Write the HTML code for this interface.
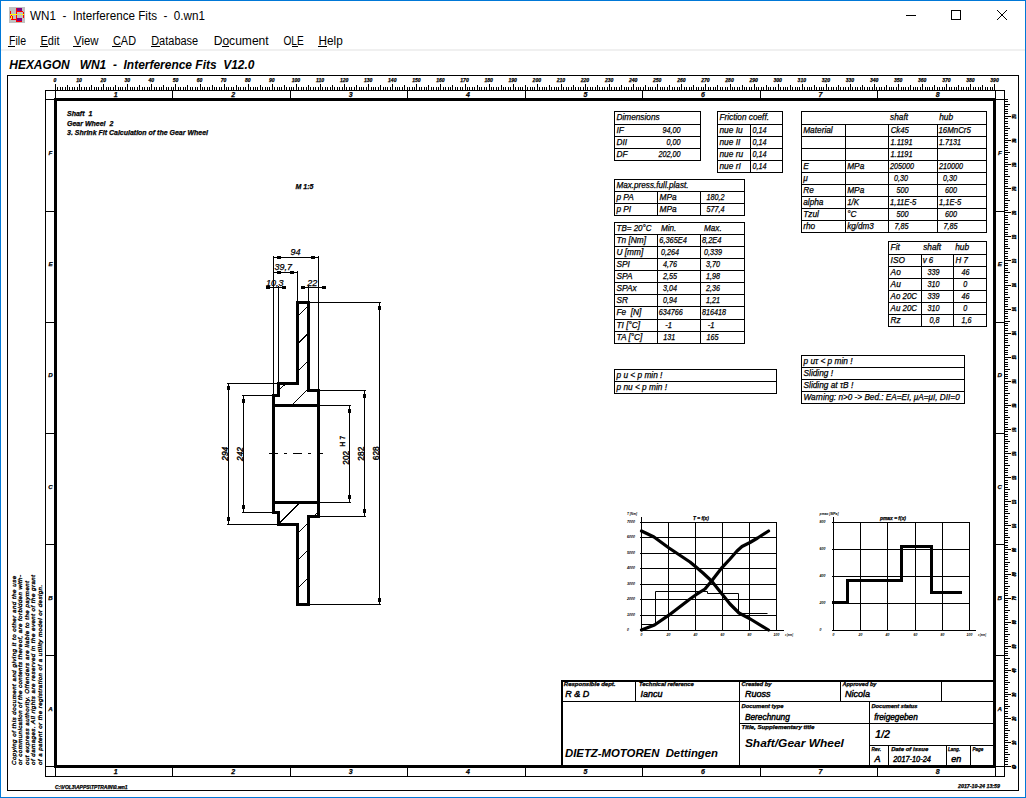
<!DOCTYPE html><html><head><meta charset="utf-8"><title>WN1 - Interference Fits</title><style>
html,body{margin:0;padding:0;background:#fff;width:1026px;height:798px;overflow:hidden}
svg{position:absolute;left:0;top:0;display:block}
text{font-family:"Liberation Sans",sans-serif;white-space:pre;stroke:#000;stroke-width:0.25px;paint-order:stroke}
</style></head><body>
<svg width="1026" height="798" viewBox="0 0 1026 798" shape-rendering="crispEdges">
<rect x="0" y="0" width="1026" height="798" fill="#fff"/>
<rect x="0" y="0" width="1026" height="1" fill="#0078d7"/>
<rect x="0" y="797" width="1026" height="1" fill="#0078d7"/>
<rect x="0" y="0" width="1" height="798" fill="#0078d7"/>
<rect x="1025" y="0" width="1" height="798" fill="#0078d7"/>
<rect x="9" y="7" width="16" height="16" fill="#c0c0c0"/>
<rect x="17" y="8" width="5" height="3" fill="#800080"/>
<rect x="17" y="18" width="5" height="3" fill="#800080"/>
<rect x="16" y="8" width="1" height="14" fill="#ff0000"/>
<rect x="16" y="11" width="7" height="1" fill="#ff0000"/>
<rect x="23" y="12" width="1" height="6" fill="#ff0000"/>
<rect x="16" y="21" width="6" height="1" fill="#ff0000"/>
<rect x="10" y="11" width="1" height="3" fill="#ff0000"/>
<rect x="10" y="16" width="1" height="2" fill="#ff0000"/>
<rect x="10" y="14" width="7" height="1" fill="#ffff00"/>
<rect x="18" y="14" width="1" height="1" fill="#ffff00"/>
<rect x="20" y="14" width="1" height="1" fill="#ffff00"/>
<rect x="22" y="14" width="2" height="1" fill="#ffff00"/>
<rect x="11" y="15" width="1" height="1" fill="#ff0000"/>
<rect x="11" y="16" width="1" height="3" fill="#ffff00"/>
<rect x="12" y="16" width="1" height="3" fill="#ff0000"/>
<rect x="11" y="19" width="5" height="1" fill="#ff0000"/>
</svg><svg width="1026" height="798" viewBox="0 0 1026 798">
<text x="30" y="20.2" font-size="12" textLength="175" lengthAdjust="spacingAndGlyphs" style="stroke-width:0" fill="#000">WN1  -  Interference Fits  -  0.wn1</text>
<g shape-rendering="crispEdges">
<rect x="906" y="15" width="10" height="1" fill="#000"/>
<rect x="951.5" y="10.5" width="9" height="9" fill="none" stroke="#000" stroke-width="1"/>
</g>
<path d="M997 10 L1007 20 M1007 10 L997 20" stroke="#000" stroke-width="1"/>
<text x="9" y="44.6" font-size="12" textLength="17" lengthAdjust="spacingAndGlyphs" style="stroke-width:0" fill="#000">File</text>
<text x="40.5" y="44.6" font-size="12" textLength="19" lengthAdjust="spacingAndGlyphs" style="stroke-width:0" fill="#000">Edit</text>
<text x="74" y="44.6" font-size="12" textLength="24.5" lengthAdjust="spacingAndGlyphs" style="stroke-width:0" fill="#000">View</text>
<text x="113" y="44.6" font-size="12" textLength="23" lengthAdjust="spacingAndGlyphs" style="stroke-width:0" fill="#000">CAD</text>
<text x="151.2" y="44.6" font-size="12" textLength="47" lengthAdjust="spacingAndGlyphs" style="stroke-width:0" fill="#000">Database</text>
<text x="213.7" y="44.6" font-size="12" textLength="55" lengthAdjust="spacingAndGlyphs" style="stroke-width:0" fill="#000">Document</text>
<text x="283.4" y="44.6" font-size="12" textLength="20.3" lengthAdjust="spacingAndGlyphs" style="stroke-width:0" fill="#000">OLE</text>
<text x="318.5" y="44.6" font-size="12" textLength="24.2" lengthAdjust="spacingAndGlyphs" style="stroke-width:0" fill="#000">Help</text>
<g shape-rendering="crispEdges">
<rect x="8" y="46" width="7" height="1" fill="#000"/>
<rect x="40" y="46" width="8" height="1" fill="#000"/>
<rect x="73" y="46" width="8" height="1" fill="#000"/>
<rect x="112" y="46" width="9" height="1" fill="#000"/>
<rect x="151" y="46" width="9" height="1" fill="#000"/>
<rect x="222" y="46" width="7" height="1" fill="#000"/>
<rect x="292" y="46" width="6" height="1" fill="#000"/>
<rect x="318" y="46" width="9" height="1" fill="#000"/>
<rect x="1" y="49" width="1024" height="2" fill="#f0f0f0"/>
</g>
<text x="9.3" y="68.8" font-size="12" font-weight="bold" font-style="italic" textLength="60.4" lengthAdjust="spacingAndGlyphs" style="stroke-width:0" fill="#000">HEXAGON</text>
<text x="79.7" y="68.8" font-size="12" font-weight="bold" font-style="italic" textLength="174.8" lengthAdjust="spacingAndGlyphs" style="stroke-width:0" fill="#000">WN1  -  Interference Fits  V12.0</text>
<g shape-rendering="crispEdges">
<rect x="7" y="75" width="1012" height="1" fill="#000"/>
<rect x="7" y="790" width="1012" height="1" fill="#000"/>
<rect x="7" y="75" width="1" height="716" fill="#000"/>
<rect x="1018" y="75" width="1" height="716" fill="#000"/>
<rect x="45" y="90" width="960" height="1" fill="#000"/>
<rect x="45" y="776" width="960" height="1" fill="#000"/>
<rect x="45" y="90" width="1" height="687" fill="#000"/>
<rect x="1004" y="90" width="1" height="687" fill="#000"/>
<rect x="54" y="98" width="941" height="3" fill="#000"/>
<rect x="54" y="765" width="941" height="3" fill="#000"/>
<rect x="54" y="98" width="3" height="670" fill="#000"/>
<rect x="993" y="98" width="3" height="670" fill="#000"/>
<rect x="45" y="99" width="11" height="1" fill="#000"/>
<rect x="55" y="90" width="1" height="10" fill="#000"/>
<rect x="995" y="99" width="10" height="1" fill="#000"/>
<rect x="995" y="90" width="1" height="10" fill="#000"/>
<rect x="45" y="766" width="11" height="1" fill="#000"/>
<rect x="55" y="766" width="1" height="11" fill="#000"/>
<rect x="995" y="766" width="10" height="1" fill="#000"/>
<rect x="995" y="766" width="1" height="11" fill="#000"/>
<rect x="172" y="90" width="1" height="10" fill="#000"/>
<rect x="172" y="766" width="1" height="11" fill="#000"/>
<rect x="290" y="90" width="1" height="10" fill="#000"/>
<rect x="290" y="766" width="1" height="11" fill="#000"/>
<rect x="407" y="90" width="1" height="10" fill="#000"/>
<rect x="407" y="766" width="1" height="11" fill="#000"/>
<rect x="525" y="90" width="1" height="10" fill="#000"/>
<rect x="525" y="766" width="1" height="11" fill="#000"/>
<rect x="642" y="90" width="1" height="10" fill="#000"/>
<rect x="642" y="766" width="1" height="11" fill="#000"/>
<rect x="760" y="90" width="1" height="10" fill="#000"/>
<rect x="760" y="766" width="1" height="11" fill="#000"/>
<rect x="877" y="90" width="1" height="10" fill="#000"/>
<rect x="877" y="766" width="1" height="11" fill="#000"/>
<rect x="45" y="211" width="11" height="1" fill="#000"/>
<rect x="995" y="211" width="10" height="1" fill="#000"/>
<rect x="45" y="322" width="11" height="1" fill="#000"/>
<rect x="995" y="322" width="10" height="1" fill="#000"/>
<rect x="45" y="433" width="11" height="1" fill="#000"/>
<rect x="995" y="433" width="10" height="1" fill="#000"/>
<rect x="45" y="544" width="11" height="1" fill="#000"/>
<rect x="995" y="544" width="10" height="1" fill="#000"/>
<rect x="45" y="655" width="11" height="1" fill="#000"/>
<rect x="995" y="655" width="10" height="1" fill="#000"/>
<rect x="55" y="84" width="1" height="6" fill="#000"/>
<rect x="57" y="87" width="1" height="3" fill="#000"/>
<rect x="60" y="87" width="1" height="3" fill="#000"/>
<rect x="62" y="87" width="1" height="3" fill="#000"/>
<rect x="65" y="87" width="1" height="3" fill="#000"/>
<rect x="67" y="85" width="1" height="5" fill="#000"/>
<rect x="69" y="87" width="1" height="3" fill="#000"/>
<rect x="72" y="87" width="1" height="3" fill="#000"/>
<rect x="74" y="87" width="1" height="3" fill="#000"/>
<rect x="77" y="87" width="1" height="3" fill="#000"/>
<rect x="79" y="84" width="1" height="6" fill="#000"/>
<rect x="81" y="87" width="1" height="3" fill="#000"/>
<rect x="84" y="87" width="1" height="3" fill="#000"/>
<rect x="86" y="87" width="1" height="3" fill="#000"/>
<rect x="89" y="87" width="1" height="3" fill="#000"/>
<rect x="91" y="85" width="1" height="5" fill="#000"/>
<rect x="94" y="87" width="1" height="3" fill="#000"/>
<rect x="96" y="87" width="1" height="3" fill="#000"/>
<rect x="98" y="87" width="1" height="3" fill="#000"/>
<rect x="101" y="87" width="1" height="3" fill="#000"/>
<rect x="103" y="84" width="1" height="6" fill="#000"/>
<rect x="106" y="87" width="1" height="3" fill="#000"/>
<rect x="108" y="87" width="1" height="3" fill="#000"/>
<rect x="110" y="87" width="1" height="3" fill="#000"/>
<rect x="113" y="87" width="1" height="3" fill="#000"/>
<rect x="115" y="85" width="1" height="5" fill="#000"/>
<rect x="118" y="87" width="1" height="3" fill="#000"/>
<rect x="120" y="87" width="1" height="3" fill="#000"/>
<rect x="122" y="87" width="1" height="3" fill="#000"/>
<rect x="125" y="87" width="1" height="3" fill="#000"/>
<rect x="127" y="84" width="1" height="6" fill="#000"/>
<rect x="130" y="87" width="1" height="3" fill="#000"/>
<rect x="132" y="87" width="1" height="3" fill="#000"/>
<rect x="134" y="87" width="1" height="3" fill="#000"/>
<rect x="137" y="87" width="1" height="3" fill="#000"/>
<rect x="139" y="85" width="1" height="5" fill="#000"/>
<rect x="142" y="87" width="1" height="3" fill="#000"/>
<rect x="144" y="87" width="1" height="3" fill="#000"/>
<rect x="147" y="87" width="1" height="3" fill="#000"/>
<rect x="149" y="87" width="1" height="3" fill="#000"/>
<rect x="151" y="84" width="1" height="6" fill="#000"/>
<rect x="154" y="87" width="1" height="3" fill="#000"/>
<rect x="156" y="87" width="1" height="3" fill="#000"/>
<rect x="159" y="87" width="1" height="3" fill="#000"/>
<rect x="161" y="87" width="1" height="3" fill="#000"/>
<rect x="163" y="85" width="1" height="5" fill="#000"/>
<rect x="166" y="87" width="1" height="3" fill="#000"/>
<rect x="168" y="87" width="1" height="3" fill="#000"/>
<rect x="171" y="87" width="1" height="3" fill="#000"/>
<rect x="173" y="87" width="1" height="3" fill="#000"/>
<rect x="175" y="84" width="1" height="6" fill="#000"/>
<rect x="178" y="87" width="1" height="3" fill="#000"/>
<rect x="180" y="87" width="1" height="3" fill="#000"/>
<rect x="183" y="87" width="1" height="3" fill="#000"/>
<rect x="185" y="87" width="1" height="3" fill="#000"/>
<rect x="187" y="85" width="1" height="5" fill="#000"/>
<rect x="190" y="87" width="1" height="3" fill="#000"/>
<rect x="192" y="87" width="1" height="3" fill="#000"/>
<rect x="195" y="87" width="1" height="3" fill="#000"/>
<rect x="197" y="87" width="1" height="3" fill="#000"/>
<rect x="200" y="84" width="1" height="6" fill="#000"/>
<rect x="202" y="87" width="1" height="3" fill="#000"/>
<rect x="204" y="87" width="1" height="3" fill="#000"/>
<rect x="207" y="87" width="1" height="3" fill="#000"/>
<rect x="209" y="87" width="1" height="3" fill="#000"/>
<rect x="212" y="85" width="1" height="5" fill="#000"/>
<rect x="214" y="87" width="1" height="3" fill="#000"/>
<rect x="216" y="87" width="1" height="3" fill="#000"/>
<rect x="219" y="87" width="1" height="3" fill="#000"/>
<rect x="221" y="87" width="1" height="3" fill="#000"/>
<rect x="224" y="84" width="1" height="6" fill="#000"/>
<rect x="226" y="87" width="1" height="3" fill="#000"/>
<rect x="228" y="87" width="1" height="3" fill="#000"/>
<rect x="231" y="87" width="1" height="3" fill="#000"/>
<rect x="233" y="87" width="1" height="3" fill="#000"/>
<rect x="236" y="85" width="1" height="5" fill="#000"/>
<rect x="238" y="87" width="1" height="3" fill="#000"/>
<rect x="240" y="87" width="1" height="3" fill="#000"/>
<rect x="243" y="87" width="1" height="3" fill="#000"/>
<rect x="245" y="87" width="1" height="3" fill="#000"/>
<rect x="248" y="84" width="1" height="6" fill="#000"/>
<rect x="250" y="87" width="1" height="3" fill="#000"/>
<rect x="253" y="87" width="1" height="3" fill="#000"/>
<rect x="255" y="87" width="1" height="3" fill="#000"/>
<rect x="257" y="87" width="1" height="3" fill="#000"/>
<rect x="260" y="85" width="1" height="5" fill="#000"/>
<rect x="262" y="87" width="1" height="3" fill="#000"/>
<rect x="265" y="87" width="1" height="3" fill="#000"/>
<rect x="267" y="87" width="1" height="3" fill="#000"/>
<rect x="269" y="87" width="1" height="3" fill="#000"/>
<rect x="272" y="84" width="1" height="6" fill="#000"/>
<rect x="274" y="87" width="1" height="3" fill="#000"/>
<rect x="277" y="87" width="1" height="3" fill="#000"/>
<rect x="279" y="87" width="1" height="3" fill="#000"/>
<rect x="281" y="87" width="1" height="3" fill="#000"/>
<rect x="284" y="85" width="1" height="5" fill="#000"/>
<rect x="286" y="87" width="1" height="3" fill="#000"/>
<rect x="289" y="87" width="1" height="3" fill="#000"/>
<rect x="291" y="87" width="1" height="3" fill="#000"/>
<rect x="293" y="87" width="1" height="3" fill="#000"/>
<rect x="296" y="84" width="1" height="6" fill="#000"/>
<rect x="298" y="87" width="1" height="3" fill="#000"/>
<rect x="301" y="87" width="1" height="3" fill="#000"/>
<rect x="303" y="87" width="1" height="3" fill="#000"/>
<rect x="306" y="87" width="1" height="3" fill="#000"/>
<rect x="308" y="85" width="1" height="5" fill="#000"/>
<rect x="310" y="87" width="1" height="3" fill="#000"/>
<rect x="313" y="87" width="1" height="3" fill="#000"/>
<rect x="315" y="87" width="1" height="3" fill="#000"/>
<rect x="318" y="87" width="1" height="3" fill="#000"/>
<rect x="320" y="84" width="1" height="6" fill="#000"/>
<rect x="322" y="87" width="1" height="3" fill="#000"/>
<rect x="325" y="87" width="1" height="3" fill="#000"/>
<rect x="327" y="87" width="1" height="3" fill="#000"/>
<rect x="330" y="87" width="1" height="3" fill="#000"/>
<rect x="332" y="85" width="1" height="5" fill="#000"/>
<rect x="334" y="87" width="1" height="3" fill="#000"/>
<rect x="337" y="87" width="1" height="3" fill="#000"/>
<rect x="339" y="87" width="1" height="3" fill="#000"/>
<rect x="342" y="87" width="1" height="3" fill="#000"/>
<rect x="344" y="84" width="1" height="6" fill="#000"/>
<rect x="346" y="87" width="1" height="3" fill="#000"/>
<rect x="349" y="87" width="1" height="3" fill="#000"/>
<rect x="351" y="87" width="1" height="3" fill="#000"/>
<rect x="354" y="87" width="1" height="3" fill="#000"/>
<rect x="356" y="85" width="1" height="5" fill="#000"/>
<rect x="359" y="87" width="1" height="3" fill="#000"/>
<rect x="361" y="87" width="1" height="3" fill="#000"/>
<rect x="363" y="87" width="1" height="3" fill="#000"/>
<rect x="366" y="87" width="1" height="3" fill="#000"/>
<rect x="368" y="84" width="1" height="6" fill="#000"/>
<rect x="371" y="87" width="1" height="3" fill="#000"/>
<rect x="373" y="87" width="1" height="3" fill="#000"/>
<rect x="375" y="87" width="1" height="3" fill="#000"/>
<rect x="378" y="87" width="1" height="3" fill="#000"/>
<rect x="380" y="85" width="1" height="5" fill="#000"/>
<rect x="383" y="87" width="1" height="3" fill="#000"/>
<rect x="385" y="87" width="1" height="3" fill="#000"/>
<rect x="387" y="87" width="1" height="3" fill="#000"/>
<rect x="390" y="87" width="1" height="3" fill="#000"/>
<rect x="392" y="84" width="1" height="6" fill="#000"/>
<rect x="395" y="87" width="1" height="3" fill="#000"/>
<rect x="397" y="87" width="1" height="3" fill="#000"/>
<rect x="399" y="87" width="1" height="3" fill="#000"/>
<rect x="402" y="87" width="1" height="3" fill="#000"/>
<rect x="404" y="85" width="1" height="5" fill="#000"/>
<rect x="407" y="87" width="1" height="3" fill="#000"/>
<rect x="409" y="87" width="1" height="3" fill="#000"/>
<rect x="412" y="87" width="1" height="3" fill="#000"/>
<rect x="414" y="87" width="1" height="3" fill="#000"/>
<rect x="416" y="84" width="1" height="6" fill="#000"/>
<rect x="419" y="87" width="1" height="3" fill="#000"/>
<rect x="421" y="87" width="1" height="3" fill="#000"/>
<rect x="424" y="87" width="1" height="3" fill="#000"/>
<rect x="426" y="87" width="1" height="3" fill="#000"/>
<rect x="428" y="85" width="1" height="5" fill="#000"/>
<rect x="431" y="87" width="1" height="3" fill="#000"/>
<rect x="433" y="87" width="1" height="3" fill="#000"/>
<rect x="436" y="87" width="1" height="3" fill="#000"/>
<rect x="438" y="87" width="1" height="3" fill="#000"/>
<rect x="440" y="84" width="1" height="6" fill="#000"/>
<rect x="443" y="87" width="1" height="3" fill="#000"/>
<rect x="445" y="87" width="1" height="3" fill="#000"/>
<rect x="448" y="87" width="1" height="3" fill="#000"/>
<rect x="450" y="87" width="1" height="3" fill="#000"/>
<rect x="452" y="85" width="1" height="5" fill="#000"/>
<rect x="455" y="87" width="1" height="3" fill="#000"/>
<rect x="457" y="87" width="1" height="3" fill="#000"/>
<rect x="460" y="87" width="1" height="3" fill="#000"/>
<rect x="462" y="87" width="1" height="3" fill="#000"/>
<rect x="465" y="84" width="1" height="6" fill="#000"/>
<rect x="467" y="87" width="1" height="3" fill="#000"/>
<rect x="469" y="87" width="1" height="3" fill="#000"/>
<rect x="472" y="87" width="1" height="3" fill="#000"/>
<rect x="474" y="87" width="1" height="3" fill="#000"/>
<rect x="477" y="85" width="1" height="5" fill="#000"/>
<rect x="479" y="87" width="1" height="3" fill="#000"/>
<rect x="481" y="87" width="1" height="3" fill="#000"/>
<rect x="484" y="87" width="1" height="3" fill="#000"/>
<rect x="486" y="87" width="1" height="3" fill="#000"/>
<rect x="489" y="84" width="1" height="6" fill="#000"/>
<rect x="491" y="87" width="1" height="3" fill="#000"/>
<rect x="493" y="87" width="1" height="3" fill="#000"/>
<rect x="496" y="87" width="1" height="3" fill="#000"/>
<rect x="498" y="87" width="1" height="3" fill="#000"/>
<rect x="501" y="85" width="1" height="5" fill="#000"/>
<rect x="503" y="87" width="1" height="3" fill="#000"/>
<rect x="505" y="87" width="1" height="3" fill="#000"/>
<rect x="508" y="87" width="1" height="3" fill="#000"/>
<rect x="510" y="87" width="1" height="3" fill="#000"/>
<rect x="513" y="84" width="1" height="6" fill="#000"/>
<rect x="515" y="87" width="1" height="3" fill="#000"/>
<rect x="518" y="87" width="1" height="3" fill="#000"/>
<rect x="520" y="87" width="1" height="3" fill="#000"/>
<rect x="522" y="87" width="1" height="3" fill="#000"/>
<rect x="525" y="85" width="1" height="5" fill="#000"/>
<rect x="527" y="87" width="1" height="3" fill="#000"/>
<rect x="530" y="87" width="1" height="3" fill="#000"/>
<rect x="532" y="87" width="1" height="3" fill="#000"/>
<rect x="534" y="87" width="1" height="3" fill="#000"/>
<rect x="537" y="84" width="1" height="6" fill="#000"/>
<rect x="539" y="87" width="1" height="3" fill="#000"/>
<rect x="542" y="87" width="1" height="3" fill="#000"/>
<rect x="544" y="87" width="1" height="3" fill="#000"/>
<rect x="546" y="87" width="1" height="3" fill="#000"/>
<rect x="549" y="85" width="1" height="5" fill="#000"/>
<rect x="551" y="87" width="1" height="3" fill="#000"/>
<rect x="554" y="87" width="1" height="3" fill="#000"/>
<rect x="556" y="87" width="1" height="3" fill="#000"/>
<rect x="558" y="87" width="1" height="3" fill="#000"/>
<rect x="561" y="84" width="1" height="6" fill="#000"/>
<rect x="563" y="87" width="1" height="3" fill="#000"/>
<rect x="566" y="87" width="1" height="3" fill="#000"/>
<rect x="568" y="87" width="1" height="3" fill="#000"/>
<rect x="571" y="87" width="1" height="3" fill="#000"/>
<rect x="573" y="85" width="1" height="5" fill="#000"/>
<rect x="575" y="87" width="1" height="3" fill="#000"/>
<rect x="578" y="87" width="1" height="3" fill="#000"/>
<rect x="580" y="87" width="1" height="3" fill="#000"/>
<rect x="583" y="87" width="1" height="3" fill="#000"/>
<rect x="585" y="84" width="1" height="6" fill="#000"/>
<rect x="587" y="87" width="1" height="3" fill="#000"/>
<rect x="590" y="87" width="1" height="3" fill="#000"/>
<rect x="592" y="87" width="1" height="3" fill="#000"/>
<rect x="595" y="87" width="1" height="3" fill="#000"/>
<rect x="597" y="85" width="1" height="5" fill="#000"/>
<rect x="599" y="87" width="1" height="3" fill="#000"/>
<rect x="602" y="87" width="1" height="3" fill="#000"/>
<rect x="604" y="87" width="1" height="3" fill="#000"/>
<rect x="607" y="87" width="1" height="3" fill="#000"/>
<rect x="609" y="84" width="1" height="6" fill="#000"/>
<rect x="611" y="87" width="1" height="3" fill="#000"/>
<rect x="614" y="87" width="1" height="3" fill="#000"/>
<rect x="616" y="87" width="1" height="3" fill="#000"/>
<rect x="619" y="87" width="1" height="3" fill="#000"/>
<rect x="621" y="85" width="1" height="5" fill="#000"/>
<rect x="624" y="87" width="1" height="3" fill="#000"/>
<rect x="626" y="87" width="1" height="3" fill="#000"/>
<rect x="628" y="87" width="1" height="3" fill="#000"/>
<rect x="631" y="87" width="1" height="3" fill="#000"/>
<rect x="633" y="84" width="1" height="6" fill="#000"/>
<rect x="636" y="87" width="1" height="3" fill="#000"/>
<rect x="638" y="87" width="1" height="3" fill="#000"/>
<rect x="640" y="87" width="1" height="3" fill="#000"/>
<rect x="643" y="87" width="1" height="3" fill="#000"/>
<rect x="645" y="85" width="1" height="5" fill="#000"/>
<rect x="648" y="87" width="1" height="3" fill="#000"/>
<rect x="650" y="87" width="1" height="3" fill="#000"/>
<rect x="652" y="87" width="1" height="3" fill="#000"/>
<rect x="655" y="87" width="1" height="3" fill="#000"/>
<rect x="657" y="84" width="1" height="6" fill="#000"/>
<rect x="660" y="87" width="1" height="3" fill="#000"/>
<rect x="662" y="87" width="1" height="3" fill="#000"/>
<rect x="664" y="87" width="1" height="3" fill="#000"/>
<rect x="667" y="87" width="1" height="3" fill="#000"/>
<rect x="669" y="85" width="1" height="5" fill="#000"/>
<rect x="672" y="87" width="1" height="3" fill="#000"/>
<rect x="674" y="87" width="1" height="3" fill="#000"/>
<rect x="677" y="87" width="1" height="3" fill="#000"/>
<rect x="679" y="87" width="1" height="3" fill="#000"/>
<rect x="681" y="84" width="1" height="6" fill="#000"/>
<rect x="684" y="87" width="1" height="3" fill="#000"/>
<rect x="686" y="87" width="1" height="3" fill="#000"/>
<rect x="689" y="87" width="1" height="3" fill="#000"/>
<rect x="691" y="87" width="1" height="3" fill="#000"/>
<rect x="693" y="85" width="1" height="5" fill="#000"/>
<rect x="696" y="87" width="1" height="3" fill="#000"/>
<rect x="698" y="87" width="1" height="3" fill="#000"/>
<rect x="701" y="87" width="1" height="3" fill="#000"/>
<rect x="703" y="87" width="1" height="3" fill="#000"/>
<rect x="705" y="84" width="1" height="6" fill="#000"/>
<rect x="708" y="87" width="1" height="3" fill="#000"/>
<rect x="710" y="87" width="1" height="3" fill="#000"/>
<rect x="713" y="87" width="1" height="3" fill="#000"/>
<rect x="715" y="87" width="1" height="3" fill="#000"/>
<rect x="717" y="85" width="1" height="5" fill="#000"/>
<rect x="720" y="87" width="1" height="3" fill="#000"/>
<rect x="722" y="87" width="1" height="3" fill="#000"/>
<rect x="725" y="87" width="1" height="3" fill="#000"/>
<rect x="727" y="87" width="1" height="3" fill="#000"/>
<rect x="730" y="84" width="1" height="6" fill="#000"/>
<rect x="732" y="87" width="1" height="3" fill="#000"/>
<rect x="734" y="87" width="1" height="3" fill="#000"/>
<rect x="737" y="87" width="1" height="3" fill="#000"/>
<rect x="739" y="87" width="1" height="3" fill="#000"/>
<rect x="742" y="85" width="1" height="5" fill="#000"/>
<rect x="744" y="87" width="1" height="3" fill="#000"/>
<rect x="746" y="87" width="1" height="3" fill="#000"/>
<rect x="749" y="87" width="1" height="3" fill="#000"/>
<rect x="751" y="87" width="1" height="3" fill="#000"/>
<rect x="754" y="84" width="1" height="6" fill="#000"/>
<rect x="756" y="87" width="1" height="3" fill="#000"/>
<rect x="758" y="87" width="1" height="3" fill="#000"/>
<rect x="761" y="87" width="1" height="3" fill="#000"/>
<rect x="763" y="87" width="1" height="3" fill="#000"/>
<rect x="766" y="85" width="1" height="5" fill="#000"/>
<rect x="768" y="87" width="1" height="3" fill="#000"/>
<rect x="770" y="87" width="1" height="3" fill="#000"/>
<rect x="773" y="87" width="1" height="3" fill="#000"/>
<rect x="775" y="87" width="1" height="3" fill="#000"/>
<rect x="778" y="84" width="1" height="6" fill="#000"/>
<rect x="780" y="87" width="1" height="3" fill="#000"/>
<rect x="783" y="87" width="1" height="3" fill="#000"/>
<rect x="785" y="87" width="1" height="3" fill="#000"/>
<rect x="787" y="87" width="1" height="3" fill="#000"/>
<rect x="790" y="85" width="1" height="5" fill="#000"/>
<rect x="792" y="87" width="1" height="3" fill="#000"/>
<rect x="795" y="87" width="1" height="3" fill="#000"/>
<rect x="797" y="87" width="1" height="3" fill="#000"/>
<rect x="799" y="87" width="1" height="3" fill="#000"/>
<rect x="802" y="84" width="1" height="6" fill="#000"/>
<rect x="804" y="87" width="1" height="3" fill="#000"/>
<rect x="807" y="87" width="1" height="3" fill="#000"/>
<rect x="809" y="87" width="1" height="3" fill="#000"/>
<rect x="811" y="87" width="1" height="3" fill="#000"/>
<rect x="814" y="85" width="1" height="5" fill="#000"/>
<rect x="816" y="87" width="1" height="3" fill="#000"/>
<rect x="819" y="87" width="1" height="3" fill="#000"/>
<rect x="821" y="87" width="1" height="3" fill="#000"/>
<rect x="823" y="87" width="1" height="3" fill="#000"/>
<rect x="826" y="84" width="1" height="6" fill="#000"/>
<rect x="828" y="87" width="1" height="3" fill="#000"/>
<rect x="831" y="87" width="1" height="3" fill="#000"/>
<rect x="833" y="87" width="1" height="3" fill="#000"/>
<rect x="836" y="87" width="1" height="3" fill="#000"/>
<rect x="838" y="85" width="1" height="5" fill="#000"/>
<rect x="840" y="87" width="1" height="3" fill="#000"/>
<rect x="843" y="87" width="1" height="3" fill="#000"/>
<rect x="845" y="87" width="1" height="3" fill="#000"/>
<rect x="848" y="87" width="1" height="3" fill="#000"/>
<rect x="850" y="84" width="1" height="6" fill="#000"/>
<rect x="852" y="87" width="1" height="3" fill="#000"/>
<rect x="855" y="87" width="1" height="3" fill="#000"/>
<rect x="857" y="87" width="1" height="3" fill="#000"/>
<rect x="860" y="87" width="1" height="3" fill="#000"/>
<rect x="862" y="85" width="1" height="5" fill="#000"/>
<rect x="864" y="87" width="1" height="3" fill="#000"/>
<rect x="867" y="87" width="1" height="3" fill="#000"/>
<rect x="869" y="87" width="1" height="3" fill="#000"/>
<rect x="872" y="87" width="1" height="3" fill="#000"/>
<rect x="874" y="84" width="1" height="6" fill="#000"/>
<rect x="876" y="87" width="1" height="3" fill="#000"/>
<rect x="879" y="87" width="1" height="3" fill="#000"/>
<rect x="881" y="87" width="1" height="3" fill="#000"/>
<rect x="884" y="87" width="1" height="3" fill="#000"/>
<rect x="886" y="85" width="1" height="5" fill="#000"/>
<rect x="889" y="87" width="1" height="3" fill="#000"/>
<rect x="891" y="87" width="1" height="3" fill="#000"/>
<rect x="893" y="87" width="1" height="3" fill="#000"/>
<rect x="896" y="87" width="1" height="3" fill="#000"/>
<rect x="898" y="84" width="1" height="6" fill="#000"/>
<rect x="901" y="87" width="1" height="3" fill="#000"/>
<rect x="903" y="87" width="1" height="3" fill="#000"/>
<rect x="905" y="87" width="1" height="3" fill="#000"/>
<rect x="908" y="87" width="1" height="3" fill="#000"/>
<rect x="910" y="85" width="1" height="5" fill="#000"/>
<rect x="913" y="87" width="1" height="3" fill="#000"/>
<rect x="915" y="87" width="1" height="3" fill="#000"/>
<rect x="917" y="87" width="1" height="3" fill="#000"/>
<rect x="920" y="87" width="1" height="3" fill="#000"/>
<rect x="922" y="84" width="1" height="6" fill="#000"/>
<rect x="925" y="87" width="1" height="3" fill="#000"/>
<rect x="927" y="87" width="1" height="3" fill="#000"/>
<rect x="929" y="87" width="1" height="3" fill="#000"/>
<rect x="932" y="87" width="1" height="3" fill="#000"/>
<rect x="934" y="85" width="1" height="5" fill="#000"/>
<rect x="937" y="87" width="1" height="3" fill="#000"/>
<rect x="939" y="87" width="1" height="3" fill="#000"/>
<rect x="942" y="87" width="1" height="3" fill="#000"/>
<rect x="944" y="87" width="1" height="3" fill="#000"/>
<rect x="946" y="84" width="1" height="6" fill="#000"/>
<rect x="949" y="87" width="1" height="3" fill="#000"/>
<rect x="951" y="87" width="1" height="3" fill="#000"/>
<rect x="954" y="87" width="1" height="3" fill="#000"/>
<rect x="956" y="87" width="1" height="3" fill="#000"/>
<rect x="958" y="85" width="1" height="5" fill="#000"/>
<rect x="961" y="87" width="1" height="3" fill="#000"/>
<rect x="963" y="87" width="1" height="3" fill="#000"/>
<rect x="966" y="87" width="1" height="3" fill="#000"/>
<rect x="968" y="87" width="1" height="3" fill="#000"/>
<rect x="970" y="84" width="1" height="6" fill="#000"/>
<rect x="973" y="87" width="1" height="3" fill="#000"/>
<rect x="975" y="87" width="1" height="3" fill="#000"/>
<rect x="978" y="87" width="1" height="3" fill="#000"/>
<rect x="980" y="87" width="1" height="3" fill="#000"/>
<rect x="982" y="85" width="1" height="5" fill="#000"/>
<rect x="985" y="87" width="1" height="3" fill="#000"/>
<rect x="987" y="87" width="1" height="3" fill="#000"/>
<rect x="990" y="87" width="1" height="3" fill="#000"/>
<rect x="992" y="87" width="1" height="3" fill="#000"/>
<rect x="994" y="84" width="1" height="6" fill="#000"/>
<rect x="1005" y="766" width="6" height="1" fill="#000"/>
<rect x="1005" y="764" width="3" height="1" fill="#000"/>
<rect x="1005" y="761" width="3" height="1" fill="#000"/>
<rect x="1005" y="759" width="3" height="1" fill="#000"/>
<rect x="1005" y="757" width="3" height="1" fill="#000"/>
<rect x="1005" y="754" width="5" height="1" fill="#000"/>
<rect x="1005" y="752" width="3" height="1" fill="#000"/>
<rect x="1005" y="749" width="3" height="1" fill="#000"/>
<rect x="1005" y="747" width="3" height="1" fill="#000"/>
<rect x="1005" y="745" width="3" height="1" fill="#000"/>
<rect x="1005" y="742" width="6" height="1" fill="#000"/>
<rect x="1005" y="740" width="3" height="1" fill="#000"/>
<rect x="1005" y="737" width="3" height="1" fill="#000"/>
<rect x="1005" y="735" width="3" height="1" fill="#000"/>
<rect x="1005" y="733" width="3" height="1" fill="#000"/>
<rect x="1005" y="730" width="5" height="1" fill="#000"/>
<rect x="1005" y="728" width="3" height="1" fill="#000"/>
<rect x="1005" y="725" width="3" height="1" fill="#000"/>
<rect x="1005" y="723" width="3" height="1" fill="#000"/>
<rect x="1005" y="721" width="3" height="1" fill="#000"/>
<rect x="1005" y="718" width="6" height="1" fill="#000"/>
<rect x="1005" y="716" width="3" height="1" fill="#000"/>
<rect x="1005" y="713" width="3" height="1" fill="#000"/>
<rect x="1005" y="711" width="3" height="1" fill="#000"/>
<rect x="1005" y="708" width="3" height="1" fill="#000"/>
<rect x="1005" y="706" width="5" height="1" fill="#000"/>
<rect x="1005" y="704" width="3" height="1" fill="#000"/>
<rect x="1005" y="701" width="3" height="1" fill="#000"/>
<rect x="1005" y="699" width="3" height="1" fill="#000"/>
<rect x="1005" y="696" width="3" height="1" fill="#000"/>
<rect x="1005" y="694" width="6" height="1" fill="#000"/>
<rect x="1005" y="692" width="3" height="1" fill="#000"/>
<rect x="1005" y="689" width="3" height="1" fill="#000"/>
<rect x="1005" y="687" width="3" height="1" fill="#000"/>
<rect x="1005" y="684" width="3" height="1" fill="#000"/>
<rect x="1005" y="682" width="5" height="1" fill="#000"/>
<rect x="1005" y="680" width="3" height="1" fill="#000"/>
<rect x="1005" y="677" width="3" height="1" fill="#000"/>
<rect x="1005" y="675" width="3" height="1" fill="#000"/>
<rect x="1005" y="672" width="3" height="1" fill="#000"/>
<rect x="1005" y="670" width="6" height="1" fill="#000"/>
<rect x="1005" y="668" width="3" height="1" fill="#000"/>
<rect x="1005" y="665" width="3" height="1" fill="#000"/>
<rect x="1005" y="663" width="3" height="1" fill="#000"/>
<rect x="1005" y="660" width="3" height="1" fill="#000"/>
<rect x="1005" y="658" width="5" height="1" fill="#000"/>
<rect x="1005" y="655" width="3" height="1" fill="#000"/>
<rect x="1005" y="653" width="3" height="1" fill="#000"/>
<rect x="1005" y="651" width="3" height="1" fill="#000"/>
<rect x="1005" y="648" width="3" height="1" fill="#000"/>
<rect x="1005" y="646" width="6" height="1" fill="#000"/>
<rect x="1005" y="643" width="3" height="1" fill="#000"/>
<rect x="1005" y="641" width="3" height="1" fill="#000"/>
<rect x="1005" y="639" width="3" height="1" fill="#000"/>
<rect x="1005" y="636" width="3" height="1" fill="#000"/>
<rect x="1005" y="634" width="5" height="1" fill="#000"/>
<rect x="1005" y="631" width="3" height="1" fill="#000"/>
<rect x="1005" y="629" width="3" height="1" fill="#000"/>
<rect x="1005" y="627" width="3" height="1" fill="#000"/>
<rect x="1005" y="624" width="3" height="1" fill="#000"/>
<rect x="1005" y="622" width="6" height="1" fill="#000"/>
<rect x="1005" y="619" width="3" height="1" fill="#000"/>
<rect x="1005" y="617" width="3" height="1" fill="#000"/>
<rect x="1005" y="615" width="3" height="1" fill="#000"/>
<rect x="1005" y="612" width="3" height="1" fill="#000"/>
<rect x="1005" y="610" width="5" height="1" fill="#000"/>
<rect x="1005" y="607" width="3" height="1" fill="#000"/>
<rect x="1005" y="605" width="3" height="1" fill="#000"/>
<rect x="1005" y="602" width="3" height="1" fill="#000"/>
<rect x="1005" y="600" width="3" height="1" fill="#000"/>
<rect x="1005" y="598" width="6" height="1" fill="#000"/>
<rect x="1005" y="595" width="3" height="1" fill="#000"/>
<rect x="1005" y="593" width="3" height="1" fill="#000"/>
<rect x="1005" y="590" width="3" height="1" fill="#000"/>
<rect x="1005" y="588" width="3" height="1" fill="#000"/>
<rect x="1005" y="586" width="5" height="1" fill="#000"/>
<rect x="1005" y="583" width="3" height="1" fill="#000"/>
<rect x="1005" y="581" width="3" height="1" fill="#000"/>
<rect x="1005" y="578" width="3" height="1" fill="#000"/>
<rect x="1005" y="576" width="3" height="1" fill="#000"/>
<rect x="1005" y="574" width="6" height="1" fill="#000"/>
<rect x="1005" y="571" width="3" height="1" fill="#000"/>
<rect x="1005" y="569" width="3" height="1" fill="#000"/>
<rect x="1005" y="566" width="3" height="1" fill="#000"/>
<rect x="1005" y="564" width="3" height="1" fill="#000"/>
<rect x="1005" y="562" width="5" height="1" fill="#000"/>
<rect x="1005" y="559" width="3" height="1" fill="#000"/>
<rect x="1005" y="557" width="3" height="1" fill="#000"/>
<rect x="1005" y="554" width="3" height="1" fill="#000"/>
<rect x="1005" y="552" width="3" height="1" fill="#000"/>
<rect x="1005" y="549" width="6" height="1" fill="#000"/>
<rect x="1005" y="547" width="3" height="1" fill="#000"/>
<rect x="1005" y="545" width="3" height="1" fill="#000"/>
<rect x="1005" y="542" width="3" height="1" fill="#000"/>
<rect x="1005" y="540" width="3" height="1" fill="#000"/>
<rect x="1005" y="537" width="5" height="1" fill="#000"/>
<rect x="1005" y="535" width="3" height="1" fill="#000"/>
<rect x="1005" y="533" width="3" height="1" fill="#000"/>
<rect x="1005" y="530" width="3" height="1" fill="#000"/>
<rect x="1005" y="528" width="3" height="1" fill="#000"/>
<rect x="1005" y="525" width="6" height="1" fill="#000"/>
<rect x="1005" y="523" width="3" height="1" fill="#000"/>
<rect x="1005" y="521" width="3" height="1" fill="#000"/>
<rect x="1005" y="518" width="3" height="1" fill="#000"/>
<rect x="1005" y="516" width="3" height="1" fill="#000"/>
<rect x="1005" y="513" width="5" height="1" fill="#000"/>
<rect x="1005" y="511" width="3" height="1" fill="#000"/>
<rect x="1005" y="509" width="3" height="1" fill="#000"/>
<rect x="1005" y="506" width="3" height="1" fill="#000"/>
<rect x="1005" y="504" width="3" height="1" fill="#000"/>
<rect x="1005" y="501" width="6" height="1" fill="#000"/>
<rect x="1005" y="499" width="3" height="1" fill="#000"/>
<rect x="1005" y="496" width="3" height="1" fill="#000"/>
<rect x="1005" y="494" width="3" height="1" fill="#000"/>
<rect x="1005" y="492" width="3" height="1" fill="#000"/>
<rect x="1005" y="489" width="5" height="1" fill="#000"/>
<rect x="1005" y="487" width="3" height="1" fill="#000"/>
<rect x="1005" y="484" width="3" height="1" fill="#000"/>
<rect x="1005" y="482" width="3" height="1" fill="#000"/>
<rect x="1005" y="480" width="3" height="1" fill="#000"/>
<rect x="1005" y="477" width="6" height="1" fill="#000"/>
<rect x="1005" y="475" width="3" height="1" fill="#000"/>
<rect x="1005" y="472" width="3" height="1" fill="#000"/>
<rect x="1005" y="470" width="3" height="1" fill="#000"/>
<rect x="1005" y="468" width="3" height="1" fill="#000"/>
<rect x="1005" y="465" width="5" height="1" fill="#000"/>
<rect x="1005" y="463" width="3" height="1" fill="#000"/>
<rect x="1005" y="460" width="3" height="1" fill="#000"/>
<rect x="1005" y="458" width="3" height="1" fill="#000"/>
<rect x="1005" y="456" width="3" height="1" fill="#000"/>
<rect x="1005" y="453" width="6" height="1" fill="#000"/>
<rect x="1005" y="451" width="3" height="1" fill="#000"/>
<rect x="1005" y="448" width="3" height="1" fill="#000"/>
<rect x="1005" y="446" width="3" height="1" fill="#000"/>
<rect x="1005" y="443" width="3" height="1" fill="#000"/>
<rect x="1005" y="441" width="5" height="1" fill="#000"/>
<rect x="1005" y="439" width="3" height="1" fill="#000"/>
<rect x="1005" y="436" width="3" height="1" fill="#000"/>
<rect x="1005" y="434" width="3" height="1" fill="#000"/>
<rect x="1005" y="431" width="3" height="1" fill="#000"/>
<rect x="1005" y="429" width="6" height="1" fill="#000"/>
<rect x="1005" y="427" width="3" height="1" fill="#000"/>
<rect x="1005" y="424" width="3" height="1" fill="#000"/>
<rect x="1005" y="422" width="3" height="1" fill="#000"/>
<rect x="1005" y="419" width="3" height="1" fill="#000"/>
<rect x="1005" y="417" width="5" height="1" fill="#000"/>
<rect x="1005" y="415" width="3" height="1" fill="#000"/>
<rect x="1005" y="412" width="3" height="1" fill="#000"/>
<rect x="1005" y="410" width="3" height="1" fill="#000"/>
<rect x="1005" y="407" width="3" height="1" fill="#000"/>
<rect x="1005" y="405" width="6" height="1" fill="#000"/>
<rect x="1005" y="403" width="3" height="1" fill="#000"/>
<rect x="1005" y="400" width="3" height="1" fill="#000"/>
<rect x="1005" y="398" width="3" height="1" fill="#000"/>
<rect x="1005" y="395" width="3" height="1" fill="#000"/>
<rect x="1005" y="393" width="5" height="1" fill="#000"/>
<rect x="1005" y="390" width="3" height="1" fill="#000"/>
<rect x="1005" y="388" width="3" height="1" fill="#000"/>
<rect x="1005" y="386" width="3" height="1" fill="#000"/>
<rect x="1005" y="383" width="3" height="1" fill="#000"/>
<rect x="1005" y="381" width="6" height="1" fill="#000"/>
<rect x="1005" y="378" width="3" height="1" fill="#000"/>
<rect x="1005" y="376" width="3" height="1" fill="#000"/>
<rect x="1005" y="374" width="3" height="1" fill="#000"/>
<rect x="1005" y="371" width="3" height="1" fill="#000"/>
<rect x="1005" y="369" width="5" height="1" fill="#000"/>
<rect x="1005" y="366" width="3" height="1" fill="#000"/>
<rect x="1005" y="364" width="3" height="1" fill="#000"/>
<rect x="1005" y="362" width="3" height="1" fill="#000"/>
<rect x="1005" y="359" width="3" height="1" fill="#000"/>
<rect x="1005" y="357" width="6" height="1" fill="#000"/>
<rect x="1005" y="354" width="3" height="1" fill="#000"/>
<rect x="1005" y="352" width="3" height="1" fill="#000"/>
<rect x="1005" y="350" width="3" height="1" fill="#000"/>
<rect x="1005" y="347" width="3" height="1" fill="#000"/>
<rect x="1005" y="345" width="5" height="1" fill="#000"/>
<rect x="1005" y="342" width="3" height="1" fill="#000"/>
<rect x="1005" y="340" width="3" height="1" fill="#000"/>
<rect x="1005" y="338" width="3" height="1" fill="#000"/>
<rect x="1005" y="335" width="3" height="1" fill="#000"/>
<rect x="1005" y="333" width="6" height="1" fill="#000"/>
<rect x="1005" y="330" width="3" height="1" fill="#000"/>
<rect x="1005" y="328" width="3" height="1" fill="#000"/>
<rect x="1005" y="325" width="3" height="1" fill="#000"/>
<rect x="1005" y="323" width="3" height="1" fill="#000"/>
<rect x="1005" y="321" width="5" height="1" fill="#000"/>
<rect x="1005" y="318" width="3" height="1" fill="#000"/>
<rect x="1005" y="316" width="3" height="1" fill="#000"/>
<rect x="1005" y="313" width="3" height="1" fill="#000"/>
<rect x="1005" y="311" width="3" height="1" fill="#000"/>
<rect x="1005" y="309" width="6" height="1" fill="#000"/>
<rect x="1005" y="306" width="3" height="1" fill="#000"/>
<rect x="1005" y="304" width="3" height="1" fill="#000"/>
<rect x="1005" y="301" width="3" height="1" fill="#000"/>
<rect x="1005" y="299" width="3" height="1" fill="#000"/>
<rect x="1005" y="297" width="5" height="1" fill="#000"/>
<rect x="1005" y="294" width="3" height="1" fill="#000"/>
<rect x="1005" y="292" width="3" height="1" fill="#000"/>
<rect x="1005" y="289" width="3" height="1" fill="#000"/>
<rect x="1005" y="287" width="3" height="1" fill="#000"/>
<rect x="1005" y="285" width="6" height="1" fill="#000"/>
<rect x="1005" y="282" width="3" height="1" fill="#000"/>
<rect x="1005" y="280" width="3" height="1" fill="#000"/>
<rect x="1005" y="277" width="3" height="1" fill="#000"/>
<rect x="1005" y="275" width="3" height="1" fill="#000"/>
<rect x="1005" y="272" width="5" height="1" fill="#000"/>
<rect x="1005" y="270" width="3" height="1" fill="#000"/>
<rect x="1005" y="268" width="3" height="1" fill="#000"/>
<rect x="1005" y="265" width="3" height="1" fill="#000"/>
<rect x="1005" y="263" width="3" height="1" fill="#000"/>
<rect x="1005" y="260" width="6" height="1" fill="#000"/>
<rect x="1005" y="258" width="3" height="1" fill="#000"/>
<rect x="1005" y="256" width="3" height="1" fill="#000"/>
<rect x="1005" y="253" width="3" height="1" fill="#000"/>
<rect x="1005" y="251" width="3" height="1" fill="#000"/>
<rect x="1005" y="248" width="5" height="1" fill="#000"/>
<rect x="1005" y="246" width="3" height="1" fill="#000"/>
<rect x="1005" y="244" width="3" height="1" fill="#000"/>
<rect x="1005" y="241" width="3" height="1" fill="#000"/>
<rect x="1005" y="239" width="3" height="1" fill="#000"/>
<rect x="1005" y="236" width="6" height="1" fill="#000"/>
<rect x="1005" y="234" width="3" height="1" fill="#000"/>
<rect x="1005" y="232" width="3" height="1" fill="#000"/>
<rect x="1005" y="229" width="3" height="1" fill="#000"/>
<rect x="1005" y="227" width="3" height="1" fill="#000"/>
<rect x="1005" y="224" width="5" height="1" fill="#000"/>
<rect x="1005" y="222" width="3" height="1" fill="#000"/>
<rect x="1005" y="219" width="3" height="1" fill="#000"/>
<rect x="1005" y="217" width="3" height="1" fill="#000"/>
<rect x="1005" y="215" width="3" height="1" fill="#000"/>
<rect x="1005" y="212" width="6" height="1" fill="#000"/>
<rect x="1005" y="210" width="3" height="1" fill="#000"/>
<rect x="1005" y="207" width="3" height="1" fill="#000"/>
<rect x="1005" y="205" width="3" height="1" fill="#000"/>
<rect x="1005" y="203" width="3" height="1" fill="#000"/>
<rect x="1005" y="200" width="5" height="1" fill="#000"/>
<rect x="1005" y="198" width="3" height="1" fill="#000"/>
<rect x="1005" y="195" width="3" height="1" fill="#000"/>
<rect x="1005" y="193" width="3" height="1" fill="#000"/>
<rect x="1005" y="191" width="3" height="1" fill="#000"/>
<rect x="1005" y="188" width="6" height="1" fill="#000"/>
<rect x="1005" y="186" width="3" height="1" fill="#000"/>
<rect x="1005" y="183" width="3" height="1" fill="#000"/>
<rect x="1005" y="181" width="3" height="1" fill="#000"/>
<rect x="1005" y="179" width="3" height="1" fill="#000"/>
<rect x="1005" y="176" width="5" height="1" fill="#000"/>
<rect x="1005" y="174" width="3" height="1" fill="#000"/>
<rect x="1005" y="171" width="3" height="1" fill="#000"/>
<rect x="1005" y="169" width="3" height="1" fill="#000"/>
<rect x="1005" y="166" width="3" height="1" fill="#000"/>
<rect x="1005" y="164" width="6" height="1" fill="#000"/>
<rect x="1005" y="162" width="3" height="1" fill="#000"/>
<rect x="1005" y="159" width="3" height="1" fill="#000"/>
<rect x="1005" y="157" width="3" height="1" fill="#000"/>
<rect x="1005" y="154" width="3" height="1" fill="#000"/>
<rect x="1005" y="152" width="5" height="1" fill="#000"/>
<rect x="1005" y="150" width="3" height="1" fill="#000"/>
<rect x="1005" y="147" width="3" height="1" fill="#000"/>
<rect x="1005" y="145" width="3" height="1" fill="#000"/>
<rect x="1005" y="142" width="3" height="1" fill="#000"/>
<rect x="1005" y="140" width="6" height="1" fill="#000"/>
<rect x="1005" y="138" width="3" height="1" fill="#000"/>
<rect x="1005" y="135" width="3" height="1" fill="#000"/>
<rect x="1005" y="133" width="3" height="1" fill="#000"/>
<rect x="1005" y="130" width="3" height="1" fill="#000"/>
<rect x="1005" y="128" width="5" height="1" fill="#000"/>
<rect x="1005" y="126" width="3" height="1" fill="#000"/>
<rect x="1005" y="123" width="3" height="1" fill="#000"/>
<rect x="1005" y="121" width="3" height="1" fill="#000"/>
<rect x="1005" y="118" width="3" height="1" fill="#000"/>
<rect x="1005" y="116" width="6" height="1" fill="#000"/>
<rect x="1005" y="113" width="3" height="1" fill="#000"/>
<rect x="1005" y="111" width="3" height="1" fill="#000"/>
<rect x="1005" y="109" width="3" height="1" fill="#000"/>
<rect x="1005" y="106" width="3" height="1" fill="#000"/>
<rect x="1005" y="104" width="5" height="1" fill="#000"/>
<rect x="1005" y="101" width="3" height="1" fill="#000"/>
<rect x="1005" y="99" width="3" height="1" fill="#000"/>
</g>
<text x="55.0" y="82" font-size="5" font-weight="bold" font-style="italic" text-anchor="middle" fill="#000">0</text>
<text x="79.08974358974359" y="82" font-size="5" font-weight="bold" font-style="italic" text-anchor="middle" fill="#000">10</text>
<text x="103.17948717948718" y="82" font-size="5" font-weight="bold" font-style="italic" text-anchor="middle" fill="#000">20</text>
<text x="127.26923076923076" y="82" font-size="5" font-weight="bold" font-style="italic" text-anchor="middle" fill="#000">30</text>
<text x="151.35897435897436" y="82" font-size="5" font-weight="bold" font-style="italic" text-anchor="middle" fill="#000">40</text>
<text x="175.44871794871796" y="82" font-size="5" font-weight="bold" font-style="italic" text-anchor="middle" fill="#000">50</text>
<text x="199.53846153846152" y="82" font-size="5" font-weight="bold" font-style="italic" text-anchor="middle" fill="#000">60</text>
<text x="223.6282051282051" y="82" font-size="5" font-weight="bold" font-style="italic" text-anchor="middle" fill="#000">70</text>
<text x="247.7179487179487" y="82" font-size="5" font-weight="bold" font-style="italic" text-anchor="middle" fill="#000">80</text>
<text x="271.80769230769226" y="82" font-size="5" font-weight="bold" font-style="italic" text-anchor="middle" fill="#000">90</text>
<text x="295.8974358974359" y="82" font-size="5" font-weight="bold" font-style="italic" text-anchor="middle" fill="#000">100</text>
<text x="319.98717948717945" y="82" font-size="5" font-weight="bold" font-style="italic" text-anchor="middle" fill="#000">110</text>
<text x="344.07692307692304" y="82" font-size="5" font-weight="bold" font-style="italic" text-anchor="middle" fill="#000">120</text>
<text x="368.16666666666663" y="82" font-size="5" font-weight="bold" font-style="italic" text-anchor="middle" fill="#000">130</text>
<text x="392.2564102564102" y="82" font-size="5" font-weight="bold" font-style="italic" text-anchor="middle" fill="#000">140</text>
<text x="416.3461538461538" y="82" font-size="5" font-weight="bold" font-style="italic" text-anchor="middle" fill="#000">150</text>
<text x="440.4358974358974" y="82" font-size="5" font-weight="bold" font-style="italic" text-anchor="middle" fill="#000">160</text>
<text x="464.525641025641" y="82" font-size="5" font-weight="bold" font-style="italic" text-anchor="middle" fill="#000">170</text>
<text x="488.6153846153846" y="82" font-size="5" font-weight="bold" font-style="italic" text-anchor="middle" fill="#000">180</text>
<text x="512.7051282051282" y="82" font-size="5" font-weight="bold" font-style="italic" text-anchor="middle" fill="#000">190</text>
<text x="536.7948717948718" y="82" font-size="5" font-weight="bold" font-style="italic" text-anchor="middle" fill="#000">200</text>
<text x="560.8846153846154" y="82" font-size="5" font-weight="bold" font-style="italic" text-anchor="middle" fill="#000">210</text>
<text x="584.9743589743589" y="82" font-size="5" font-weight="bold" font-style="italic" text-anchor="middle" fill="#000">220</text>
<text x="609.0641025641025" y="82" font-size="5" font-weight="bold" font-style="italic" text-anchor="middle" fill="#000">230</text>
<text x="633.1538461538461" y="82" font-size="5" font-weight="bold" font-style="italic" text-anchor="middle" fill="#000">240</text>
<text x="657.2435897435897" y="82" font-size="5" font-weight="bold" font-style="italic" text-anchor="middle" fill="#000">250</text>
<text x="681.3333333333333" y="82" font-size="5" font-weight="bold" font-style="italic" text-anchor="middle" fill="#000">260</text>
<text x="705.4230769230769" y="82" font-size="5" font-weight="bold" font-style="italic" text-anchor="middle" fill="#000">270</text>
<text x="729.5128205128204" y="82" font-size="5" font-weight="bold" font-style="italic" text-anchor="middle" fill="#000">280</text>
<text x="753.6025641025641" y="82" font-size="5" font-weight="bold" font-style="italic" text-anchor="middle" fill="#000">290</text>
<text x="777.6923076923076" y="82" font-size="5" font-weight="bold" font-style="italic" text-anchor="middle" fill="#000">300</text>
<text x="801.7820512820513" y="82" font-size="5" font-weight="bold" font-style="italic" text-anchor="middle" fill="#000">310</text>
<text x="825.8717948717948" y="82" font-size="5" font-weight="bold" font-style="italic" text-anchor="middle" fill="#000">320</text>
<text x="849.9615384615385" y="82" font-size="5" font-weight="bold" font-style="italic" text-anchor="middle" fill="#000">330</text>
<text x="874.051282051282" y="82" font-size="5" font-weight="bold" font-style="italic" text-anchor="middle" fill="#000">340</text>
<text x="898.1410256410256" y="82" font-size="5" font-weight="bold" font-style="italic" text-anchor="middle" fill="#000">350</text>
<text x="922.2307692307692" y="82" font-size="5" font-weight="bold" font-style="italic" text-anchor="middle" fill="#000">360</text>
<text x="946.3205128205128" y="82" font-size="5" font-weight="bold" font-style="italic" text-anchor="middle" fill="#000">370</text>
<text x="970.4102564102564" y="82" font-size="5" font-weight="bold" font-style="italic" text-anchor="middle" fill="#000">380</text>
<text x="994.5" y="82" font-size="5" font-weight="bold" font-style="italic" text-anchor="middle" fill="#000">390</text>
<text x="0" y="0" font-size="4.6" font-weight="bold" font-style="italic" textLength="4" lengthAdjust="spacingAndGlyphs" transform="translate(1016.2,768.9) rotate(-90)" style="stroke-width:0.5px">0</text>
<text x="0" y="0" font-size="4.6" font-weight="bold" font-style="italic" textLength="4" lengthAdjust="spacingAndGlyphs" transform="translate(1016.2,744.8102564102564) rotate(-90)" style="stroke-width:0.5px">10</text>
<text x="0" y="0" font-size="4.6" font-weight="bold" font-style="italic" textLength="4" lengthAdjust="spacingAndGlyphs" transform="translate(1016.2,720.7205128205128) rotate(-90)" style="stroke-width:0.5px">20</text>
<text x="0" y="0" font-size="4.6" font-weight="bold" font-style="italic" textLength="4" lengthAdjust="spacingAndGlyphs" transform="translate(1016.2,696.6307692307693) rotate(-90)" style="stroke-width:0.5px">30</text>
<text x="0" y="0" font-size="4.6" font-weight="bold" font-style="italic" textLength="4" lengthAdjust="spacingAndGlyphs" transform="translate(1016.2,672.5410256410256) rotate(-90)" style="stroke-width:0.5px">40</text>
<text x="0" y="0" font-size="4.6" font-weight="bold" font-style="italic" textLength="4" lengthAdjust="spacingAndGlyphs" transform="translate(1016.2,648.4512820512821) rotate(-90)" style="stroke-width:0.5px">50</text>
<text x="0" y="0" font-size="4.6" font-weight="bold" font-style="italic" textLength="4" lengthAdjust="spacingAndGlyphs" transform="translate(1016.2,624.3615384615384) rotate(-90)" style="stroke-width:0.5px">60</text>
<text x="0" y="0" font-size="4.6" font-weight="bold" font-style="italic" textLength="4" lengthAdjust="spacingAndGlyphs" transform="translate(1016.2,600.2717948717949) rotate(-90)" style="stroke-width:0.5px">70</text>
<text x="0" y="0" font-size="4.6" font-weight="bold" font-style="italic" textLength="4" lengthAdjust="spacingAndGlyphs" transform="translate(1016.2,576.1820512820512) rotate(-90)" style="stroke-width:0.5px">80</text>
<text x="0" y="0" font-size="4.6" font-weight="bold" font-style="italic" textLength="4" lengthAdjust="spacingAndGlyphs" transform="translate(1016.2,552.0923076923077) rotate(-90)" style="stroke-width:0.5px">90</text>
<text x="0" y="0" font-size="4.6" font-weight="bold" font-style="italic" textLength="4" lengthAdjust="spacingAndGlyphs" transform="translate(1016.2,528.0025641025641) rotate(-90)" style="stroke-width:0.5px">100</text>
<text x="0" y="0" font-size="4.6" font-weight="bold" font-style="italic" textLength="4" lengthAdjust="spacingAndGlyphs" transform="translate(1016.2,503.91282051282053) rotate(-90)" style="stroke-width:0.5px">110</text>
<text x="0" y="0" font-size="4.6" font-weight="bold" font-style="italic" textLength="4" lengthAdjust="spacingAndGlyphs" transform="translate(1016.2,479.82307692307694) rotate(-90)" style="stroke-width:0.5px">120</text>
<text x="0" y="0" font-size="4.6" font-weight="bold" font-style="italic" textLength="4" lengthAdjust="spacingAndGlyphs" transform="translate(1016.2,455.73333333333335) rotate(-90)" style="stroke-width:0.5px">130</text>
<text x="0" y="0" font-size="4.6" font-weight="bold" font-style="italic" textLength="4" lengthAdjust="spacingAndGlyphs" transform="translate(1016.2,431.64358974358976) rotate(-90)" style="stroke-width:0.5px">140</text>
<text x="0" y="0" font-size="4.6" font-weight="bold" font-style="italic" textLength="4" lengthAdjust="spacingAndGlyphs" transform="translate(1016.2,407.55384615384617) rotate(-90)" style="stroke-width:0.5px">150</text>
<text x="0" y="0" font-size="4.6" font-weight="bold" font-style="italic" textLength="4" lengthAdjust="spacingAndGlyphs" transform="translate(1016.2,383.4641025641026) rotate(-90)" style="stroke-width:0.5px">160</text>
<text x="0" y="0" font-size="4.6" font-weight="bold" font-style="italic" textLength="4" lengthAdjust="spacingAndGlyphs" transform="translate(1016.2,359.374358974359) rotate(-90)" style="stroke-width:0.5px">170</text>
<text x="0" y="0" font-size="4.6" font-weight="bold" font-style="italic" textLength="4" lengthAdjust="spacingAndGlyphs" transform="translate(1016.2,335.2846153846154) rotate(-90)" style="stroke-width:0.5px">180</text>
<text x="0" y="0" font-size="4.6" font-weight="bold" font-style="italic" textLength="4" lengthAdjust="spacingAndGlyphs" transform="translate(1016.2,311.1948717948718) rotate(-90)" style="stroke-width:0.5px">190</text>
<text x="0" y="0" font-size="4.6" font-weight="bold" font-style="italic" textLength="4" lengthAdjust="spacingAndGlyphs" transform="translate(1016.2,287.1051282051282) rotate(-90)" style="stroke-width:0.5px">200</text>
<text x="0" y="0" font-size="4.6" font-weight="bold" font-style="italic" textLength="4" lengthAdjust="spacingAndGlyphs" transform="translate(1016.2,263.0153846153846) rotate(-90)" style="stroke-width:0.5px">210</text>
<text x="0" y="0" font-size="4.6" font-weight="bold" font-style="italic" textLength="4" lengthAdjust="spacingAndGlyphs" transform="translate(1016.2,238.92564102564106) rotate(-90)" style="stroke-width:0.5px">220</text>
<text x="0" y="0" font-size="4.6" font-weight="bold" font-style="italic" textLength="4" lengthAdjust="spacingAndGlyphs" transform="translate(1016.2,214.8358974358974) rotate(-90)" style="stroke-width:0.5px">230</text>
<text x="0" y="0" font-size="4.6" font-weight="bold" font-style="italic" textLength="4" lengthAdjust="spacingAndGlyphs" transform="translate(1016.2,190.74615384615387) rotate(-90)" style="stroke-width:0.5px">240</text>
<text x="0" y="0" font-size="4.6" font-weight="bold" font-style="italic" textLength="4" lengthAdjust="spacingAndGlyphs" transform="translate(1016.2,166.65641025641023) rotate(-90)" style="stroke-width:0.5px">250</text>
<text x="0" y="0" font-size="4.6" font-weight="bold" font-style="italic" textLength="4" lengthAdjust="spacingAndGlyphs" transform="translate(1016.2,142.5666666666667) rotate(-90)" style="stroke-width:0.5px">260</text>
<text x="0" y="0" font-size="4.6" font-weight="bold" font-style="italic" textLength="4" lengthAdjust="spacingAndGlyphs" transform="translate(1016.2,118.47692307692304) rotate(-90)" style="stroke-width:0.5px">270</text>
<text x="115.71875" y="97" font-size="7" font-weight="bold" font-style="italic" text-anchor="middle" fill="#000">1</text>
<text x="115.71875" y="774" font-size="7" font-weight="bold" font-style="italic" text-anchor="middle" fill="#000">1</text>
<text x="233.15625" y="97" font-size="7" font-weight="bold" font-style="italic" text-anchor="middle" fill="#000">2</text>
<text x="233.15625" y="774" font-size="7" font-weight="bold" font-style="italic" text-anchor="middle" fill="#000">2</text>
<text x="350.59375" y="97" font-size="7" font-weight="bold" font-style="italic" text-anchor="middle" fill="#000">3</text>
<text x="350.59375" y="774" font-size="7" font-weight="bold" font-style="italic" text-anchor="middle" fill="#000">3</text>
<text x="468.03125" y="97" font-size="7" font-weight="bold" font-style="italic" text-anchor="middle" fill="#000">4</text>
<text x="468.03125" y="774" font-size="7" font-weight="bold" font-style="italic" text-anchor="middle" fill="#000">4</text>
<text x="585.46875" y="97" font-size="7" font-weight="bold" font-style="italic" text-anchor="middle" fill="#000">5</text>
<text x="585.46875" y="774" font-size="7" font-weight="bold" font-style="italic" text-anchor="middle" fill="#000">5</text>
<text x="702.90625" y="97" font-size="7" font-weight="bold" font-style="italic" text-anchor="middle" fill="#000">6</text>
<text x="702.90625" y="774" font-size="7" font-weight="bold" font-style="italic" text-anchor="middle" fill="#000">6</text>
<text x="820.34375" y="97" font-size="7" font-weight="bold" font-style="italic" text-anchor="middle" fill="#000">7</text>
<text x="820.34375" y="774" font-size="7" font-weight="bold" font-style="italic" text-anchor="middle" fill="#000">7</text>
<text x="937.78125" y="97" font-size="7" font-weight="bold" font-style="italic" text-anchor="middle" fill="#000">8</text>
<text x="937.78125" y="774" font-size="7" font-weight="bold" font-style="italic" text-anchor="middle" fill="#000">8</text>
<text x="50.5" y="154.90833333333333" font-size="6.2" font-weight="bold" font-style="italic" text-anchor="middle" fill="#000">F</text>
<text x="999.8" y="154.90833333333333" font-size="6.2" font-weight="bold" font-style="italic" text-anchor="middle" fill="#000">F</text>
<text x="50.5" y="266.125" font-size="6.2" font-weight="bold" font-style="italic" text-anchor="middle" fill="#000">E</text>
<text x="999.8" y="266.125" font-size="6.2" font-weight="bold" font-style="italic" text-anchor="middle" fill="#000">E</text>
<text x="50.5" y="377.34166666666664" font-size="6.2" font-weight="bold" font-style="italic" text-anchor="middle" fill="#000">D</text>
<text x="999.8" y="377.34166666666664" font-size="6.2" font-weight="bold" font-style="italic" text-anchor="middle" fill="#000">D</text>
<text x="50.5" y="488.5583333333333" font-size="6.2" font-weight="bold" font-style="italic" text-anchor="middle" fill="#000">C</text>
<text x="999.8" y="488.5583333333333" font-size="6.2" font-weight="bold" font-style="italic" text-anchor="middle" fill="#000">C</text>
<text x="50.5" y="599.7749999999999" font-size="6.2" font-weight="bold" font-style="italic" text-anchor="middle" fill="#000">B</text>
<text x="999.8" y="599.7749999999999" font-size="6.2" font-weight="bold" font-style="italic" text-anchor="middle" fill="#000">B</text>
<text x="50.5" y="710.9916666666666" font-size="6.2" font-weight="bold" font-style="italic" text-anchor="middle" fill="#000">A</text>
<text x="999.8" y="710.9916666666666" font-size="6.2" font-weight="bold" font-style="italic" text-anchor="middle" fill="#000">A</text>
<text x="67" y="115.5" font-size="7" font-weight="bold" font-style="italic" fill="#000">Shaft  1</text>
<text x="67" y="125.8" font-size="7" font-weight="bold" font-style="italic" fill="#000">Gear Wheel  2</text>
<text x="67" y="135.3" font-size="7" font-weight="bold" font-style="italic" textLength="141" lengthAdjust="spacingAndGlyphs" fill="#000">3. Shrink Fit Calculation of the Gear Wheel</text>
<text x="295.5" y="189" font-size="7" font-weight="bold" font-style="italic" fill="#000">M 1:5</text>
<g shape-rendering="crispEdges">
<rect x="614" y="111" width="87" height="1" fill="#000"/>
<rect x="614" y="124" width="87" height="1" fill="#000"/>
<rect x="614" y="136" width="87" height="1" fill="#000"/>
<rect x="614" y="148" width="87" height="1" fill="#000"/>
<rect x="614" y="160" width="87" height="1" fill="#000"/>
<rect x="614" y="111" width="1" height="50" fill="#000"/>
<rect x="700" y="111" width="1" height="50" fill="#000"/>
</g>
<text x="616.4" y="120.3" font-size="8.3" font-style="italic" fill="#000">Dimensions</text>
<text x="616.4" y="133.3" font-size="8.3" font-style="italic" fill="#000">IF</text>
<text x="662.5" y="133.3" font-size="8.3" font-style="italic" textLength="18.00" lengthAdjust="spacingAndGlyphs" fill="#000">94,00</text>
<text x="616.4" y="145.3" font-size="8.3" font-style="italic" fill="#000">DII</text>
<text x="666.5" y="145.3" font-size="8.3" font-style="italic" textLength="14.00" lengthAdjust="spacingAndGlyphs" fill="#000">0,00</text>
<text x="616.4" y="157.3" font-size="8.3" font-style="italic" fill="#000">DF</text>
<text x="658.5" y="157.3" font-size="8.3" font-style="italic" textLength="22.00" lengthAdjust="spacingAndGlyphs" fill="#000">202,00</text>
<g shape-rendering="crispEdges">
<rect x="717" y="111" width="66" height="1" fill="#000"/>
<rect x="717" y="124" width="66" height="1" fill="#000"/>
<rect x="717" y="136" width="66" height="1" fill="#000"/>
<rect x="717" y="148" width="66" height="1" fill="#000"/>
<rect x="717" y="160" width="66" height="1" fill="#000"/>
<rect x="717" y="172" width="66" height="1" fill="#000"/>
<rect x="717" y="111" width="1" height="62" fill="#000"/>
<rect x="782" y="111" width="1" height="62" fill="#000"/>
<rect x="750" y="124" width="1" height="49" fill="#000"/>
</g>
<text x="719.5" y="120.3" font-size="8.3" font-style="italic" textLength="49.51" lengthAdjust="spacingAndGlyphs" fill="#000">Friction coeff.</text>
<text x="719.5" y="133.3" font-size="8.3" font-style="italic" fill="#000">nue Iu</text>
<text x="752.5" y="133.3" font-size="8.3" font-style="italic" textLength="14.00" lengthAdjust="spacingAndGlyphs" fill="#000">0,14</text>
<text x="719.5" y="145.3" font-size="8.3" font-style="italic" fill="#000">nue II</text>
<text x="752.5" y="145.3" font-size="8.3" font-style="italic" textLength="14.00" lengthAdjust="spacingAndGlyphs" fill="#000">0,14</text>
<text x="719.5" y="157.3" font-size="8.3" font-style="italic" fill="#000">nue ru</text>
<text x="752.5" y="157.3" font-size="8.3" font-style="italic" textLength="14.00" lengthAdjust="spacingAndGlyphs" fill="#000">0,14</text>
<text x="719.5" y="169.3" font-size="8.3" font-style="italic" fill="#000">nue rI</text>
<text x="752.5" y="169.3" font-size="8.3" font-style="italic" textLength="14.00" lengthAdjust="spacingAndGlyphs" fill="#000">0,14</text>
<g shape-rendering="crispEdges">
<rect x="614" y="179" width="131" height="1" fill="#000"/>
<rect x="614" y="191" width="131" height="1" fill="#000"/>
<rect x="614" y="203" width="131" height="1" fill="#000"/>
<rect x="614" y="215" width="131" height="1" fill="#000"/>
<rect x="614" y="179" width="1" height="37" fill="#000"/>
<rect x="744" y="179" width="1" height="37" fill="#000"/>
<rect x="657" y="191" width="1" height="25" fill="#000"/>
<rect x="700" y="191" width="1" height="25" fill="#000"/>
</g>
<text x="616.4" y="188.3" font-size="8.3" font-style="italic" textLength="72.12" lengthAdjust="spacingAndGlyphs" fill="#000">Max.press.full.plast.</text>
<text x="616.4" y="200.3" font-size="8.3" font-style="italic" fill="#000">p PA</text>
<text x="659.5" y="200.3" font-size="8.3" font-style="italic" fill="#000">MPa</text>
<text x="706.5" y="200.3" font-size="8.3" font-style="italic" textLength="18.00" lengthAdjust="spacingAndGlyphs" fill="#000">180,2</text>
<text x="616.4" y="212.3" font-size="8.3" font-style="italic" fill="#000">p PI</text>
<text x="659.5" y="212.3" font-size="8.3" font-style="italic" fill="#000">MPa</text>
<text x="706.5" y="212.3" font-size="8.3" font-style="italic" textLength="18.00" lengthAdjust="spacingAndGlyphs" fill="#000">577,4</text>
<g shape-rendering="crispEdges">
<rect x="614" y="222" width="131" height="1" fill="#000"/>
<rect x="614" y="234" width="131" height="1" fill="#000"/>
<rect x="614" y="246" width="131" height="1" fill="#000"/>
<rect x="614" y="258" width="131" height="1" fill="#000"/>
<rect x="614" y="270" width="131" height="1" fill="#000"/>
<rect x="614" y="282" width="131" height="1" fill="#000"/>
<rect x="614" y="294" width="131" height="1" fill="#000"/>
<rect x="614" y="306" width="131" height="1" fill="#000"/>
<rect x="614" y="319" width="131" height="1" fill="#000"/>
<rect x="614" y="331" width="131" height="1" fill="#000"/>
<rect x="614" y="343" width="131" height="1" fill="#000"/>
<rect x="614" y="222" width="1" height="122" fill="#000"/>
<rect x="744" y="222" width="1" height="122" fill="#000"/>
<rect x="657" y="234" width="1" height="110" fill="#000"/>
<rect x="700" y="234" width="1" height="110" fill="#000"/>
</g>
<text x="616.5" y="231.3" font-size="8.3" font-style="italic" textLength="35.07" lengthAdjust="spacingAndGlyphs" fill="#000">TB= 20°C</text>
<text x="661" y="231.3" font-size="8.3" font-style="italic" textLength="15.37" lengthAdjust="spacingAndGlyphs" fill="#000">Min.</text>
<text x="704" y="231.3" font-size="8.3" font-style="italic" textLength="17.68" lengthAdjust="spacingAndGlyphs" fill="#000">Max.</text>
<text x="616.5" y="243.3" font-size="8.3" font-style="italic" fill="#000">Tn [Nm]</text>
<text x="659.3" y="243.3" font-size="8.3" font-style="italic" textLength="27.54" lengthAdjust="spacingAndGlyphs" fill="#000">6,365E4</text>
<text x="701.9" y="243.3" font-size="8.3" font-style="italic" textLength="19.54" lengthAdjust="spacingAndGlyphs" fill="#000">8,2E4</text>
<text x="616.5" y="255.3" font-size="8.3" font-style="italic" fill="#000">U [mm]</text>
<text x="661.1" y="255.3" font-size="8.3" font-style="italic" textLength="18.00" lengthAdjust="spacingAndGlyphs" fill="#000">0,264</text>
<text x="704" y="255.3" font-size="8.3" font-style="italic" textLength="18.00" lengthAdjust="spacingAndGlyphs" fill="#000">0,339</text>
<text x="616.5" y="267.3" font-size="8.3" font-style="italic" fill="#000">SPI</text>
<text x="663" y="267.3" font-size="8.3" font-style="italic" textLength="14.00" lengthAdjust="spacingAndGlyphs" fill="#000">4,76</text>
<text x="706" y="267.3" font-size="8.3" font-style="italic" textLength="14.00" lengthAdjust="spacingAndGlyphs" fill="#000">3,70</text>
<text x="616.5" y="279.3" font-size="8.3" font-style="italic" fill="#000">SPA</text>
<text x="663" y="279.3" font-size="8.3" font-style="italic" textLength="14.00" lengthAdjust="spacingAndGlyphs" fill="#000">2,55</text>
<text x="706" y="279.3" font-size="8.3" font-style="italic" textLength="14.00" lengthAdjust="spacingAndGlyphs" fill="#000">1,98</text>
<text x="616.5" y="291.3" font-size="8.3" font-style="italic" fill="#000">SPAx</text>
<text x="663" y="291.3" font-size="8.3" font-style="italic" textLength="14.00" lengthAdjust="spacingAndGlyphs" fill="#000">3,04</text>
<text x="706" y="291.3" font-size="8.3" font-style="italic" textLength="14.00" lengthAdjust="spacingAndGlyphs" fill="#000">2,36</text>
<text x="616.5" y="303.3" font-size="8.3" font-style="italic" fill="#000">SR</text>
<text x="663" y="303.3" font-size="8.3" font-style="italic" textLength="14.00" lengthAdjust="spacingAndGlyphs" fill="#000">0,94</text>
<text x="706" y="303.3" font-size="8.3" font-style="italic" textLength="14.00" lengthAdjust="spacingAndGlyphs" fill="#000">1,21</text>
<text x="616.5" y="315.3" font-size="8.3" font-style="italic" fill="#000">Fe  [N]</text>
<text x="658.7" y="315.3" font-size="8.3" font-style="italic" textLength="24.00" lengthAdjust="spacingAndGlyphs" fill="#000">634766</text>
<text x="701.9" y="315.3" font-size="8.3" font-style="italic" textLength="24.00" lengthAdjust="spacingAndGlyphs" fill="#000">816418</text>
<text x="616.5" y="328.3" font-size="8.3" font-style="italic" fill="#000">TI [°C]</text>
<text x="665.2" y="328.3" font-size="8.3" font-style="italic" textLength="6.76" lengthAdjust="spacingAndGlyphs" fill="#000">-1</text>
<text x="707.8" y="328.3" font-size="8.3" font-style="italic" textLength="6.76" lengthAdjust="spacingAndGlyphs" fill="#000">-1</text>
<text x="616.5" y="340.3" font-size="8.3" font-style="italic" fill="#000">TA [°C]</text>
<text x="663.3" y="340.3" font-size="8.3" font-style="italic" textLength="12.00" lengthAdjust="spacingAndGlyphs" fill="#000">131</text>
<text x="706.5" y="340.3" font-size="8.3" font-style="italic" textLength="12.00" lengthAdjust="spacingAndGlyphs" fill="#000">165</text>
<g shape-rendering="crispEdges">
<rect x="801" y="111" width="186" height="1" fill="#000"/>
<rect x="801" y="124" width="186" height="1" fill="#000"/>
<rect x="801" y="136" width="186" height="1" fill="#000"/>
<rect x="801" y="148" width="186" height="1" fill="#000"/>
<rect x="801" y="160" width="186" height="1" fill="#000"/>
<rect x="801" y="172" width="186" height="1" fill="#000"/>
<rect x="801" y="184" width="186" height="1" fill="#000"/>
<rect x="801" y="196" width="186" height="1" fill="#000"/>
<rect x="801" y="208" width="186" height="1" fill="#000"/>
<rect x="801" y="220" width="186" height="1" fill="#000"/>
<rect x="801" y="232" width="186" height="1" fill="#000"/>
<rect x="801" y="111" width="1" height="122" fill="#000"/>
<rect x="986" y="111" width="1" height="122" fill="#000"/>
<rect x="845" y="124" width="1" height="109" fill="#000"/>
<rect x="888" y="124" width="1" height="109" fill="#000"/>
<rect x="937" y="124" width="1" height="109" fill="#000"/>
</g>
<text x="890.1" y="120.3" font-size="8.3" font-style="italic" fill="#000">shaft</text>
<text x="939.2" y="120.3" font-size="8.3" font-style="italic" fill="#000">hub</text>
<text x="803.2" y="133.3" font-size="8.3" font-style="italic" fill="#000">Material</text>
<text x="847.2" y="133.3" font-size="8.3" font-style="italic" fill="#000"></text>
<text x="890.7" y="133.3" font-size="8.3" font-style="italic" textLength="18.14" lengthAdjust="spacingAndGlyphs" fill="#000">Ck45</text>
<text x="938.5" y="133.3" font-size="8.3" font-style="italic" textLength="32.29" lengthAdjust="spacingAndGlyphs" fill="#000">16MnCr5</text>
<text x="803.2" y="145.3" font-size="8.3" font-style="italic" fill="#000"></text>
<text x="847.2" y="145.3" font-size="8.3" font-style="italic" fill="#000"></text>
<text x="890.5" y="145.3" font-size="8.3" font-style="italic" textLength="22.00" lengthAdjust="spacingAndGlyphs" fill="#000">1.1191</text>
<text x="939" y="145.3" font-size="8.3" font-style="italic" textLength="22.00" lengthAdjust="spacingAndGlyphs" fill="#000">1.7131</text>
<text x="803.2" y="157.3" font-size="8.3" font-style="italic" fill="#000"></text>
<text x="847.2" y="157.3" font-size="8.3" font-style="italic" fill="#000"></text>
<text x="890.5" y="157.3" font-size="8.3" font-style="italic" textLength="22.00" lengthAdjust="spacingAndGlyphs" fill="#000">1.1191</text>
<text x="939" y="157.3" font-size="8.3" font-style="italic" fill="#000"></text>
<text x="803.2" y="169.3" font-size="8.3" font-style="italic" fill="#000">E</text>
<text x="847.2" y="169.3" font-size="8.3" font-style="italic" fill="#000">MPa</text>
<text x="890" y="169.3" font-size="8.3" font-style="italic" textLength="24.00" lengthAdjust="spacingAndGlyphs" fill="#000">205000</text>
<text x="939" y="169.3" font-size="8.3" font-style="italic" textLength="24.00" lengthAdjust="spacingAndGlyphs" fill="#000">210000</text>
<text x="803.2" y="181.3" font-size="8.3" font-style="italic" fill="#000">μ</text>
<text x="847.2" y="181.3" font-size="8.3" font-style="italic" fill="#000"></text>
<text x="894" y="181.3" font-size="8.3" font-style="italic" textLength="14.00" lengthAdjust="spacingAndGlyphs" fill="#000">0,30</text>
<text x="943.1" y="181.3" font-size="8.3" font-style="italic" textLength="14.00" lengthAdjust="spacingAndGlyphs" fill="#000">0,30</text>
<text x="803.2" y="193.3" font-size="8.3" font-style="italic" fill="#000">Re</text>
<text x="847.2" y="193.3" font-size="8.3" font-style="italic" fill="#000">MPa</text>
<text x="896.4" y="193.3" font-size="8.3" font-style="italic" textLength="12.00" lengthAdjust="spacingAndGlyphs" fill="#000">500</text>
<text x="945.1" y="193.3" font-size="8.3" font-style="italic" textLength="12.00" lengthAdjust="spacingAndGlyphs" fill="#000">600</text>
<text x="803.2" y="205.3" font-size="8.3" font-style="italic" fill="#000">alpha</text>
<text x="847.2" y="205.3" font-size="8.3" font-style="italic" textLength="11.84" lengthAdjust="spacingAndGlyphs" fill="#000">1/K</text>
<text x="890" y="205.3" font-size="8.3" font-style="italic" textLength="26.30" lengthAdjust="spacingAndGlyphs" fill="#000">1,11E-5</text>
<text x="939" y="205.3" font-size="8.3" font-style="italic" textLength="22.30" lengthAdjust="spacingAndGlyphs" fill="#000">1,1E-5</text>
<text x="803.2" y="217.3" font-size="8.3" font-style="italic" fill="#000">Tzul</text>
<text x="847.2" y="217.3" font-size="8.3" font-style="italic" fill="#000">°C</text>
<text x="896.4" y="217.3" font-size="8.3" font-style="italic" textLength="12.00" lengthAdjust="spacingAndGlyphs" fill="#000">500</text>
<text x="945.1" y="217.3" font-size="8.3" font-style="italic" textLength="12.00" lengthAdjust="spacingAndGlyphs" fill="#000">600</text>
<text x="803.2" y="229.3" font-size="8.3" font-style="italic" fill="#000">rho</text>
<text x="847.2" y="229.3" font-size="8.3" font-style="italic" textLength="26.60" lengthAdjust="spacingAndGlyphs" fill="#000">kg/dm3</text>
<text x="894.4" y="229.3" font-size="8.3" font-style="italic" textLength="14.00" lengthAdjust="spacingAndGlyphs" fill="#000">7,85</text>
<text x="943.5" y="229.3" font-size="8.3" font-style="italic" textLength="14.00" lengthAdjust="spacingAndGlyphs" fill="#000">7,85</text>
<g shape-rendering="crispEdges">
<rect x="888" y="241" width="99" height="1" fill="#000"/>
<rect x="888" y="254" width="99" height="1" fill="#000"/>
<rect x="888" y="266" width="99" height="1" fill="#000"/>
<rect x="888" y="278" width="99" height="1" fill="#000"/>
<rect x="888" y="290" width="99" height="1" fill="#000"/>
<rect x="888" y="302" width="99" height="1" fill="#000"/>
<rect x="888" y="314" width="99" height="1" fill="#000"/>
<rect x="888" y="326" width="99" height="1" fill="#000"/>
<rect x="888" y="241" width="1" height="86" fill="#000"/>
<rect x="986" y="241" width="1" height="86" fill="#000"/>
<rect x="921" y="254" width="1" height="73" fill="#000"/>
<rect x="953" y="254" width="1" height="73" fill="#000"/>
</g>
<text x="890.6" y="250.3" font-size="8.3" font-style="italic" fill="#000">Fit</text>
<text x="923.2" y="250.3" font-size="8.3" font-style="italic" fill="#000">shaft</text>
<text x="955.2" y="250.3" font-size="8.3" font-style="italic" fill="#000">hub</text>
<text x="890.6" y="263.3" font-size="8.3" font-style="italic" fill="#000">ISO</text>
<text x="922.7" y="263.3" font-size="8.3" font-style="italic" textLength="10.46" lengthAdjust="spacingAndGlyphs" fill="#000">v 6</text>
<text x="955.5" y="263.3" font-size="8.3" font-style="italic" textLength="12.30" lengthAdjust="spacingAndGlyphs" fill="#000">H 7</text>
<text x="890.6" y="275.3" font-size="8.3" font-style="italic" fill="#000">Ao</text>
<text x="927.4" y="275.3" font-size="8.3" font-style="italic" textLength="12.00" lengthAdjust="spacingAndGlyphs" fill="#000">339</text>
<text x="961.4" y="275.3" font-size="8.3" font-style="italic" textLength="8.00" lengthAdjust="spacingAndGlyphs" fill="#000">46</text>
<text x="890.6" y="287.3" font-size="8.3" font-style="italic" fill="#000">Au</text>
<text x="927.4" y="287.3" font-size="8.3" font-style="italic" textLength="12.00" lengthAdjust="spacingAndGlyphs" fill="#000">310</text>
<text x="963.3" y="287.3" font-size="8.3" font-style="italic" textLength="4.00" lengthAdjust="spacingAndGlyphs" fill="#000">0</text>
<text x="890.6" y="299.3" font-size="8.3" font-style="italic" textLength="26.45" lengthAdjust="spacingAndGlyphs" fill="#000">Ao 20C</text>
<text x="927.4" y="299.3" font-size="8.3" font-style="italic" textLength="12.00" lengthAdjust="spacingAndGlyphs" fill="#000">339</text>
<text x="961.4" y="299.3" font-size="8.3" font-style="italic" textLength="8.00" lengthAdjust="spacingAndGlyphs" fill="#000">46</text>
<text x="890.6" y="311.3" font-size="8.3" font-style="italic" textLength="26.45" lengthAdjust="spacingAndGlyphs" fill="#000">Au 20C</text>
<text x="927.4" y="311.3" font-size="8.3" font-style="italic" textLength="12.00" lengthAdjust="spacingAndGlyphs" fill="#000">310</text>
<text x="963.3" y="311.3" font-size="8.3" font-style="italic" textLength="4.00" lengthAdjust="spacingAndGlyphs" fill="#000">0</text>
<text x="890.6" y="323.3" font-size="8.3" font-style="italic" fill="#000">Rz</text>
<text x="929.5" y="323.3" font-size="8.3" font-style="italic" textLength="10.00" lengthAdjust="spacingAndGlyphs" fill="#000">0,8</text>
<text x="961.4" y="323.3" font-size="8.3" font-style="italic" textLength="10.00" lengthAdjust="spacingAndGlyphs" fill="#000">1,6</text>
<g shape-rendering="crispEdges">
<rect x="614" y="369" width="163" height="1" fill="#000"/>
<rect x="614" y="381" width="163" height="1" fill="#000"/>
<rect x="614" y="393" width="163" height="1" fill="#000"/>
<rect x="614" y="369" width="1" height="25" fill="#000"/>
<rect x="776" y="369" width="1" height="25" fill="#000"/>
</g>
<text x="616.5" y="378.3" font-size="8.3" font-style="italic" fill="#000">p u &lt; p min !</text>
<text x="616.5" y="390.3" font-size="8.3" font-style="italic" fill="#000">p nu &lt; p min !</text>
<g shape-rendering="crispEdges">
<rect x="801" y="355" width="164" height="1" fill="#000"/>
<rect x="801" y="367" width="164" height="1" fill="#000"/>
<rect x="801" y="379" width="164" height="1" fill="#000"/>
<rect x="801" y="391" width="164" height="1" fill="#000"/>
<rect x="801" y="403" width="164" height="1" fill="#000"/>
<rect x="801" y="355" width="1" height="49" fill="#000"/>
<rect x="964" y="355" width="1" height="49" fill="#000"/>
</g>
<text x="803.5" y="364.3" font-size="8.3" font-style="italic" fill="#000">p uτ &lt; p min !</text>
<text x="803.5" y="376.3" font-size="8.3" font-style="italic" fill="#000">Sliding !</text>
<text x="803.5" y="388.3" font-size="8.3" font-style="italic" fill="#000">Sliding at τB !</text>
<text x="803.5" y="400.3" font-size="8.3" font-style="italic" textLength="156.19" lengthAdjust="spacingAndGlyphs" fill="#000">Warning: n&gt;0 -&gt; Bed.: EA=EI, μA=μI, DII=0</text>
<g shape-rendering="crispEdges">
<rect x="273" y="257" width="46" height="1" fill="#000"/>
<rect x="273" y="256" width="1" height="139" fill="#000"/>
<rect x="318" y="256" width="1" height="134" fill="#000"/>
<rect x="277" y="256" width="4" height="3" fill="#000"/>
<rect x="311" y="256" width="4" height="3" fill="#000"/>
<rect x="273" y="272" width="25" height="1" fill="#000"/>
<rect x="297" y="271" width="1" height="31" fill="#000"/>
<rect x="277" y="271" width="4" height="3" fill="#000"/>
<rect x="290" y="271" width="4" height="3" fill="#000"/>
<rect x="266" y="287" width="20" height="1" fill="#000"/>
<rect x="278" y="286" width="1" height="97" fill="#000"/>
<rect x="266" y="286" width="4" height="3" fill="#000"/>
<rect x="282" y="286" width="4" height="3" fill="#000"/>
<rect x="301" y="287" width="25" height="1" fill="#000"/>
<rect x="308" y="286" width="1" height="16" fill="#000"/>
<rect x="301" y="286" width="4" height="3" fill="#000"/>
<rect x="322" y="286" width="4" height="3" fill="#000"/>
<rect x="309" y="302" width="72" height="1" fill="#000"/>
<rect x="309" y="604" width="72" height="1" fill="#000"/>
<rect x="379" y="302" width="1" height="303" fill="#000"/>
<rect x="378" y="306" width="3" height="4" fill="#000"/>
<rect x="378" y="598" width="3" height="4" fill="#000"/>
<rect x="319" y="390" width="47" height="1" fill="#000"/>
<rect x="319" y="516" width="47" height="1" fill="#000"/>
<rect x="364" y="390" width="1" height="127" fill="#000"/>
<rect x="363" y="394" width="3" height="4" fill="#000"/>
<rect x="363" y="509" width="3" height="4" fill="#000"/>
<rect x="319" y="405" width="32" height="1" fill="#000"/>
<rect x="319" y="502" width="32" height="1" fill="#000"/>
<rect x="349" y="405" width="1" height="98" fill="#000"/>
<rect x="348" y="409" width="3" height="4" fill="#000"/>
<rect x="348" y="495" width="3" height="4" fill="#000"/>
<rect x="227" y="383" width="51" height="1" fill="#000"/>
<rect x="227" y="524" width="51" height="1" fill="#000"/>
<rect x="228" y="383" width="1" height="142" fill="#000"/>
<rect x="227" y="386" width="3" height="4" fill="#000"/>
<rect x="227" y="517" width="3" height="4" fill="#000"/>
<rect x="242" y="395" width="31" height="1" fill="#000"/>
<rect x="242" y="512" width="31" height="1" fill="#000"/>
<rect x="243" y="395" width="1" height="118" fill="#000"/>
<rect x="242" y="399" width="3" height="4" fill="#000"/>
<rect x="242" y="505" width="3" height="4" fill="#000"/>
<rect x="269" y="453" width="9" height="1" fill="#000"/>
<rect x="284" y="453" width="3" height="1" fill="#000"/>
<rect x="293" y="453" width="9" height="1" fill="#000"/>
<rect x="308" y="453" width="3" height="1" fill="#000"/>
<rect x="319" y="453" width="4" height="1" fill="#000"/>
</g>
<g fill="none" stroke="#000" stroke-width="3" stroke-linejoin="miter" stroke-linecap="square" shape-rendering="crispEdges">
<path d="M297.5 302.5 L308.5 302.5 L308.5 390.5 L318.5 390.5 L318.5 516.5 L308.5 516.5 L308.5 604.5 L297.5 604.5 L297.5 524.5 L278.5 524.5 L278.5 512.5 L273.5 512.5 L273.5 395.5 L278.5 395.5 L278.5 383.5 L297.5 383.5 L297.5 302.5"/>
<path d="M273.5 405.5 L318.5 405.5"/>
<path d="M273.5 502.5 L318.5 502.5"/>
</g>
<g stroke="#000" stroke-width="1" fill="none" shape-rendering="crispEdges">
<line x1="299" y1="315" x2="307.5" y2="306.5"/>
<line x1="299" y1="342.5" x2="307.5" y2="334"/>
<line x1="299" y1="370" x2="307.5" y2="361.5"/>
<line x1="293" y1="404" x2="307.5" y2="389.5"/>
<line x1="279.5" y1="389" x2="285" y2="384.5"/>
<line x1="280" y1="522.5" x2="299" y2="503.5"/>
<line x1="315" y1="515" x2="317.5" y2="512.5"/>
<line x1="299" y1="532" x2="307.5" y2="523.5"/>
<line x1="299" y1="559" x2="307.5" y2="550.5"/>
<line x1="299" y1="587" x2="307.5" y2="578.5"/>
</g>
<text x="290.4" y="254.5" font-size="9" font-style="italic" fill="#000">94</text>
<text x="274.6" y="270" font-size="9" font-style="italic" fill="#000">39,7</text>
<text x="265.9" y="285.8" font-size="9" font-style="italic" fill="#000">10,3</text>
<text x="307.3" y="285.8" font-size="9" font-style="italic" fill="#000">22</text>
<text x="0" y="0" font-size="8.3" font-style="italic" textLength="14" lengthAdjust="spacing" transform="translate(228,460.8) rotate(-90)" fill="#000" style="stroke-width:0.4px">294</text>
<text x="0" y="0" font-size="8.3" font-style="italic" textLength="14" lengthAdjust="spacing" transform="translate(243,461) rotate(-90)" fill="#000" style="stroke-width:0.4px">242</text>
<text x="0" y="0" font-size="8.3" textLength="14" lengthAdjust="spacing" transform="translate(349.2,464.8) rotate(-90)" fill="#000" style="stroke-width:0.4px">202</text>
<text x="0" y="0" font-size="6.3" textLength="10.5" lengthAdjust="spacing" transform="translate(345.2,446.6) rotate(-90)" fill="#000" style="stroke-width:0.4px">H 7</text>
<text x="0" y="0" font-size="8.3" textLength="14" lengthAdjust="spacing" transform="translate(364,460.7) rotate(-90)" fill="#000" style="stroke-width:0.4px">282</text>
<text x="0" y="0" font-size="8.3" textLength="14" lengthAdjust="spacing" transform="translate(378.5,460.3) rotate(-90)" fill="#000" style="stroke-width:0.4px">628</text>
<g shape-rendering="crispEdges">
<rect x="641" y="522" width="1" height="109" fill="#000"/>
<rect x="668" y="522" width="1" height="109" fill="#000"/>
<rect x="695" y="522" width="1" height="109" fill="#000"/>
<rect x="722" y="522" width="1" height="109" fill="#000"/>
<rect x="749" y="522" width="1" height="109" fill="#000"/>
<rect x="776" y="522" width="1" height="109" fill="#000"/>
<rect x="640" y="522" width="137" height="1" fill="#000"/>
<rect x="640" y="537" width="137" height="1" fill="#000"/>
<rect x="640" y="553" width="137" height="1" fill="#000"/>
<rect x="640" y="568" width="137" height="1" fill="#000"/>
<rect x="640" y="584" width="137" height="1" fill="#000"/>
<rect x="640" y="599" width="137" height="1" fill="#000"/>
<rect x="640" y="615" width="137" height="1" fill="#000"/>
<rect x="640" y="630" width="137" height="1" fill="#000"/>
<rect x="641" y="517" width="1" height="114" fill="#000"/>
<rect x="641" y="630" width="143" height="1" fill="#000"/>
</g>
<text x="693" y="520" font-size="4.8" font-weight="bold" font-style="italic" fill="#000">T = f(x)</text>
<text x="627" y="514.5" font-size="3.5" font-weight="bold" font-style="italic" textLength="10" lengthAdjust="spacingAndGlyphs" style="stroke-width:0" fill="#000">T [Nm]</text>
<text x="627" y="523" font-size="3.5" font-weight="bold" font-style="italic" textLength="8" lengthAdjust="spacingAndGlyphs" style="stroke-width:0" fill="#000">7000</text>
<text x="627" y="538" font-size="3.5" font-weight="bold" font-style="italic" textLength="8" lengthAdjust="spacingAndGlyphs" style="stroke-width:0" fill="#000">6000</text>
<text x="627" y="554" font-size="3.5" font-weight="bold" font-style="italic" textLength="8" lengthAdjust="spacingAndGlyphs" style="stroke-width:0" fill="#000">5000</text>
<text x="627" y="569" font-size="3.5" font-weight="bold" font-style="italic" textLength="8" lengthAdjust="spacingAndGlyphs" style="stroke-width:0" fill="#000">4000</text>
<text x="627" y="585" font-size="3.5" font-weight="bold" font-style="italic" textLength="8" lengthAdjust="spacingAndGlyphs" style="stroke-width:0" fill="#000">3000</text>
<text x="627" y="600" font-size="3.5" font-weight="bold" font-style="italic" textLength="8" lengthAdjust="spacingAndGlyphs" style="stroke-width:0" fill="#000">2000</text>
<text x="627" y="616" font-size="3.5" font-weight="bold" font-style="italic" textLength="8" lengthAdjust="spacingAndGlyphs" style="stroke-width:0" fill="#000">1000</text>
<text x="627" y="631" font-size="3.5" font-weight="bold" font-style="italic" style="stroke-width:0" fill="#000">0</text>
<text x="641.5" y="635.5" font-size="3.5" font-weight="bold" font-style="italic" text-anchor="middle" style="stroke-width:0" fill="#000">0</text>
<text x="668.5" y="635.5" font-size="3.5" font-weight="bold" font-style="italic" text-anchor="middle" style="stroke-width:0" fill="#000">20</text>
<text x="695.5" y="635.5" font-size="3.5" font-weight="bold" font-style="italic" text-anchor="middle" style="stroke-width:0" fill="#000">40</text>
<text x="722.5" y="635.5" font-size="3.5" font-weight="bold" font-style="italic" text-anchor="middle" style="stroke-width:0" fill="#000">60</text>
<text x="749.5" y="635.5" font-size="3.5" font-weight="bold" font-style="italic" text-anchor="middle" style="stroke-width:0" fill="#000">80</text>
<text x="776.5" y="635.5" font-size="3.5" font-weight="bold" font-style="italic" text-anchor="middle" style="stroke-width:0" fill="#000">100</text>
<text x="785" y="635.5" font-size="3.5" font-weight="bold" font-style="italic" textLength="8" lengthAdjust="spacingAndGlyphs" style="stroke-width:0" fill="#000">x [mm]</text>
<g fill="none" stroke="#000" stroke-width="1">
<path d="M641 624.5 H655.5 V591.5 H707.5 V593.5 H738.5 V613.5 H767.5"/>
</g>
<g fill="none" stroke="#000" stroke-width="3.2" stroke-linejoin="round" stroke-linecap="round">
<path d="M641.5 531 L654 537 L669 548 L690 562 L696 567 L703 573 L711.6 581 L722 594 L730 604 L739 613 L749.5 618.5 L768.5 630"/>
<path d="M641.5 630 L654.5 625 L668.5 615.4 L690 599 L696 594.7 L705 589 L711.6 581 L722 567.6 L730 559 L737 551 L742 546.5 L750 542.5 L757.6 538 L768.6 531"/>
</g>
<g shape-rendering="crispEdges">
<rect x="833" y="522" width="1" height="109" fill="#000"/>
<rect x="860" y="522" width="1" height="109" fill="#000"/>
<rect x="887" y="522" width="1" height="109" fill="#000"/>
<rect x="915" y="522" width="1" height="109" fill="#000"/>
<rect x="942" y="522" width="1" height="109" fill="#000"/>
<rect x="969" y="522" width="1" height="109" fill="#000"/>
<rect x="832" y="522" width="138" height="1" fill="#000"/>
<rect x="832" y="549" width="138" height="1" fill="#000"/>
<rect x="832" y="576" width="138" height="1" fill="#000"/>
<rect x="832" y="603" width="138" height="1" fill="#000"/>
<rect x="832" y="630" width="138" height="1" fill="#000"/>
<rect x="833" y="517" width="1" height="114" fill="#000"/>
<rect x="833" y="630" width="143" height="1" fill="#000"/>
</g>
<text x="880" y="520" font-size="4.8" font-weight="bold" font-style="italic" textLength="26" lengthAdjust="spacingAndGlyphs" fill="#000">pmax = f(x)</text>
<text x="819.6" y="514.5" font-size="3.5" font-weight="bold" font-style="italic" textLength="19" lengthAdjust="spacingAndGlyphs" style="stroke-width:0" fill="#000">pmax [MPa]</text>
<text x="819.6" y="523" font-size="3.5" font-weight="bold" font-style="italic" textLength="6" lengthAdjust="spacingAndGlyphs" style="stroke-width:0" fill="#000">800</text>
<text x="819.6" y="550" font-size="3.5" font-weight="bold" font-style="italic" textLength="6" lengthAdjust="spacingAndGlyphs" style="stroke-width:0" fill="#000">600</text>
<text x="819.6" y="577" font-size="3.5" font-weight="bold" font-style="italic" textLength="6" lengthAdjust="spacingAndGlyphs" style="stroke-width:0" fill="#000">400</text>
<text x="819.6" y="604" font-size="3.5" font-weight="bold" font-style="italic" textLength="6" lengthAdjust="spacingAndGlyphs" style="stroke-width:0" fill="#000">200</text>
<text x="819.6" y="631" font-size="3.5" font-weight="bold" font-style="italic" style="stroke-width:0" fill="#000">0</text>
<text x="833.5" y="635.5" font-size="3.5" font-weight="bold" font-style="italic" text-anchor="middle" style="stroke-width:0" fill="#000">0</text>
<text x="860.5" y="635.5" font-size="3.5" font-weight="bold" font-style="italic" text-anchor="middle" style="stroke-width:0" fill="#000">20</text>
<text x="887.5" y="635.5" font-size="3.5" font-weight="bold" font-style="italic" text-anchor="middle" style="stroke-width:0" fill="#000">40</text>
<text x="915.5" y="635.5" font-size="3.5" font-weight="bold" font-style="italic" text-anchor="middle" style="stroke-width:0" fill="#000">60</text>
<text x="942.5" y="635.5" font-size="3.5" font-weight="bold" font-style="italic" text-anchor="middle" style="stroke-width:0" fill="#000">80</text>
<text x="969.5" y="635.5" font-size="3.5" font-weight="bold" font-style="italic" text-anchor="middle" style="stroke-width:0" fill="#000">100</text>
<text x="978" y="635.5" font-size="3.5" font-weight="bold" font-style="italic" textLength="8" lengthAdjust="spacingAndGlyphs" style="stroke-width:0" fill="#000">x [mm]</text>
<g fill="none" stroke="#000" stroke-width="3" stroke-linejoin="miter" stroke-linecap="butt">
<path d="M832 602.5 H847.5 V580.5 H901.5 V546.5 H931.5 V592.5 H962"/>
</g>
<g shape-rendering="crispEdges">
<rect x="561" y="680" width="434" height="2" fill="#000"/>
<rect x="561" y="680" width="2" height="87" fill="#000"/>
<rect x="563" y="701" width="431" height="1" fill="#000"/>
<rect x="635" y="682" width="1" height="20" fill="#000"/>
<rect x="739" y="682" width="1" height="84" fill="#000"/>
<rect x="840" y="682" width="1" height="20" fill="#000"/>
<rect x="941" y="682" width="1" height="20" fill="#000"/>
<rect x="739" y="723" width="255" height="1" fill="#000"/>
<rect x="869" y="702" width="1" height="64" fill="#000"/>
<rect x="869" y="745" width="125" height="1" fill="#000"/>
<rect x="888" y="746" width="1" height="20" fill="#000"/>
<rect x="946" y="746" width="1" height="20" fill="#000"/>
<rect x="970" y="746" width="1" height="20" fill="#000"/>
</g>
<text x="563.8" y="686.3" font-size="4.6" font-weight="bold" font-style="italic" textLength="51.7" lengthAdjust="spacingAndGlyphs" fill="#000">Responsible dept.</text>
<text x="565.3" y="697" font-size="9" font-style="italic" style="stroke-width:0.45px" fill="#000">R &amp; D</text>
<text x="638.9" y="686.3" font-size="4.6" font-weight="bold" font-style="italic" textLength="55" lengthAdjust="spacingAndGlyphs" fill="#000">Technical reference</text>
<text x="640.4" y="697" font-size="9" font-style="italic" style="stroke-width:0.45px" fill="#000">Iancu</text>
<text x="741.5" y="686.3" font-size="4.6" font-weight="bold" font-style="italic" textLength="30" lengthAdjust="spacingAndGlyphs" fill="#000">Created by</text>
<text x="744.9" y="697.1" font-size="9" font-style="italic" style="stroke-width:0.45px" fill="#000">Ruoss</text>
<text x="842.4" y="686.3" font-size="4.6" font-weight="bold" font-style="italic" textLength="34" lengthAdjust="spacingAndGlyphs" fill="#000">Approved by</text>
<text x="845.1" y="697.1" font-size="9" font-style="italic" style="stroke-width:0.45px" fill="#000">Nicola</text>
<text x="741.5" y="708.2" font-size="4.6" font-weight="bold" font-style="italic" textLength="42" lengthAdjust="spacingAndGlyphs" fill="#000">Document type</text>
<text x="744.9" y="719.6" font-size="9" font-style="italic" textLength="45" lengthAdjust="spacingAndGlyphs" style="stroke-width:0.45px" fill="#000">Berechnung</text>
<text x="871.5" y="708.3" font-size="4.6" font-weight="bold" font-style="italic" textLength="46" lengthAdjust="spacingAndGlyphs" fill="#000">Document status</text>
<text x="874.2" y="719.6" font-size="9" font-style="italic" textLength="43.6" lengthAdjust="spacingAndGlyphs" style="stroke-width:0.45px" fill="#000">freigegeben</text>
<text x="741.5" y="729" font-size="4.6" font-weight="bold" font-style="italic" textLength="73" lengthAdjust="spacingAndGlyphs" fill="#000">Title, Supplementary title</text>
<text x="744.9" y="746.6" font-size="11" font-weight="bold" font-style="italic" textLength="99" lengthAdjust="spacingAndGlyphs" style="stroke-width:0" fill="#000">Shaft/Gear Wheel</text>
<text x="565" y="757.4" font-size="11" font-weight="bold" font-style="italic" textLength="153" lengthAdjust="spacingAndGlyphs" style="stroke-width:0" fill="#000">DIETZ-MOTOREN  Dettingen</text>
<text x="874.9" y="737.6" font-size="11" font-weight="bold" font-style="italic" style="stroke-width:0" fill="#000">1/2</text>
<text x="871.5" y="750.6" font-size="4.6" font-weight="bold" font-style="italic" fill="#000">Rev.</text>
<text x="874.5" y="761.5" font-size="9" font-style="italic" style="stroke-width:0.45px" fill="#000">A</text>
<text x="891.2" y="750.6" font-size="4.6" font-weight="bold" font-style="italic" textLength="37" lengthAdjust="spacingAndGlyphs" fill="#000">Date of issue</text>
<text x="893.3" y="761.5" font-size="9" font-style="italic" textLength="37.5" lengthAdjust="spacingAndGlyphs" style="stroke-width:0.45px" fill="#000">2017-10-24</text>
<text x="947.9" y="750.6" font-size="4.6" font-weight="bold" font-style="italic" fill="#000">Lang.</text>
<text x="951.3" y="761.5" font-size="9" font-style="italic" style="stroke-width:0.45px" fill="#000">en</text>
<text x="972.4" y="750.6" font-size="4.6" font-weight="bold" font-style="italic" fill="#000">Page</text>
<text x="0" y="0" font-size="6.2" font-style="italic" textLength="189.20000000000005" lengthAdjust="spacing" transform="translate(15.5,765) rotate(-90)" fill="#000" style="stroke-width:0.35px">Copying of this document and giving it to other and the use</text>
<text x="0" y="0" font-size="6.2" font-style="italic" textLength="190" lengthAdjust="spacing" transform="translate(22.1,765) rotate(-90)" fill="#000" style="stroke-width:0.35px">or communication of the contents thereof, are forbidden with-</text>
<text x="0" y="0" font-size="6.2" font-style="italic" textLength="184" lengthAdjust="spacing" transform="translate(28.7,765) rotate(-90)" fill="#000" style="stroke-width:0.35px">out express authority. Offenders are liable to the payment</text>
<text x="0" y="0" font-size="6.2" font-style="italic" textLength="190" lengthAdjust="spacing" transform="translate(35.3,765) rotate(-90)" fill="#000" style="stroke-width:0.35px">of damages. All rights are reserved in the event of the grant</text>
<text x="0" y="0" font-size="6.2" font-style="italic" textLength="180.20000000000005" lengthAdjust="spacing" transform="translate(41.9,765) rotate(-90)" fill="#000" style="stroke-width:0.35px">of a patent or the registration of a utility model or design.</text>
<text x="55" y="788.5" font-size="4.8" font-weight="bold" font-style="italic" textLength="72.6" lengthAdjust="spacingAndGlyphs" fill="#000">C:\VOL3\APPS\TPTRAIN\0.wn1</text>
<text x="958" y="788.4" font-size="4.8" font-weight="bold" font-style="italic" textLength="42" lengthAdjust="spacingAndGlyphs" fill="#000">2017-10-24 13:59</text>
</svg></body></html>
